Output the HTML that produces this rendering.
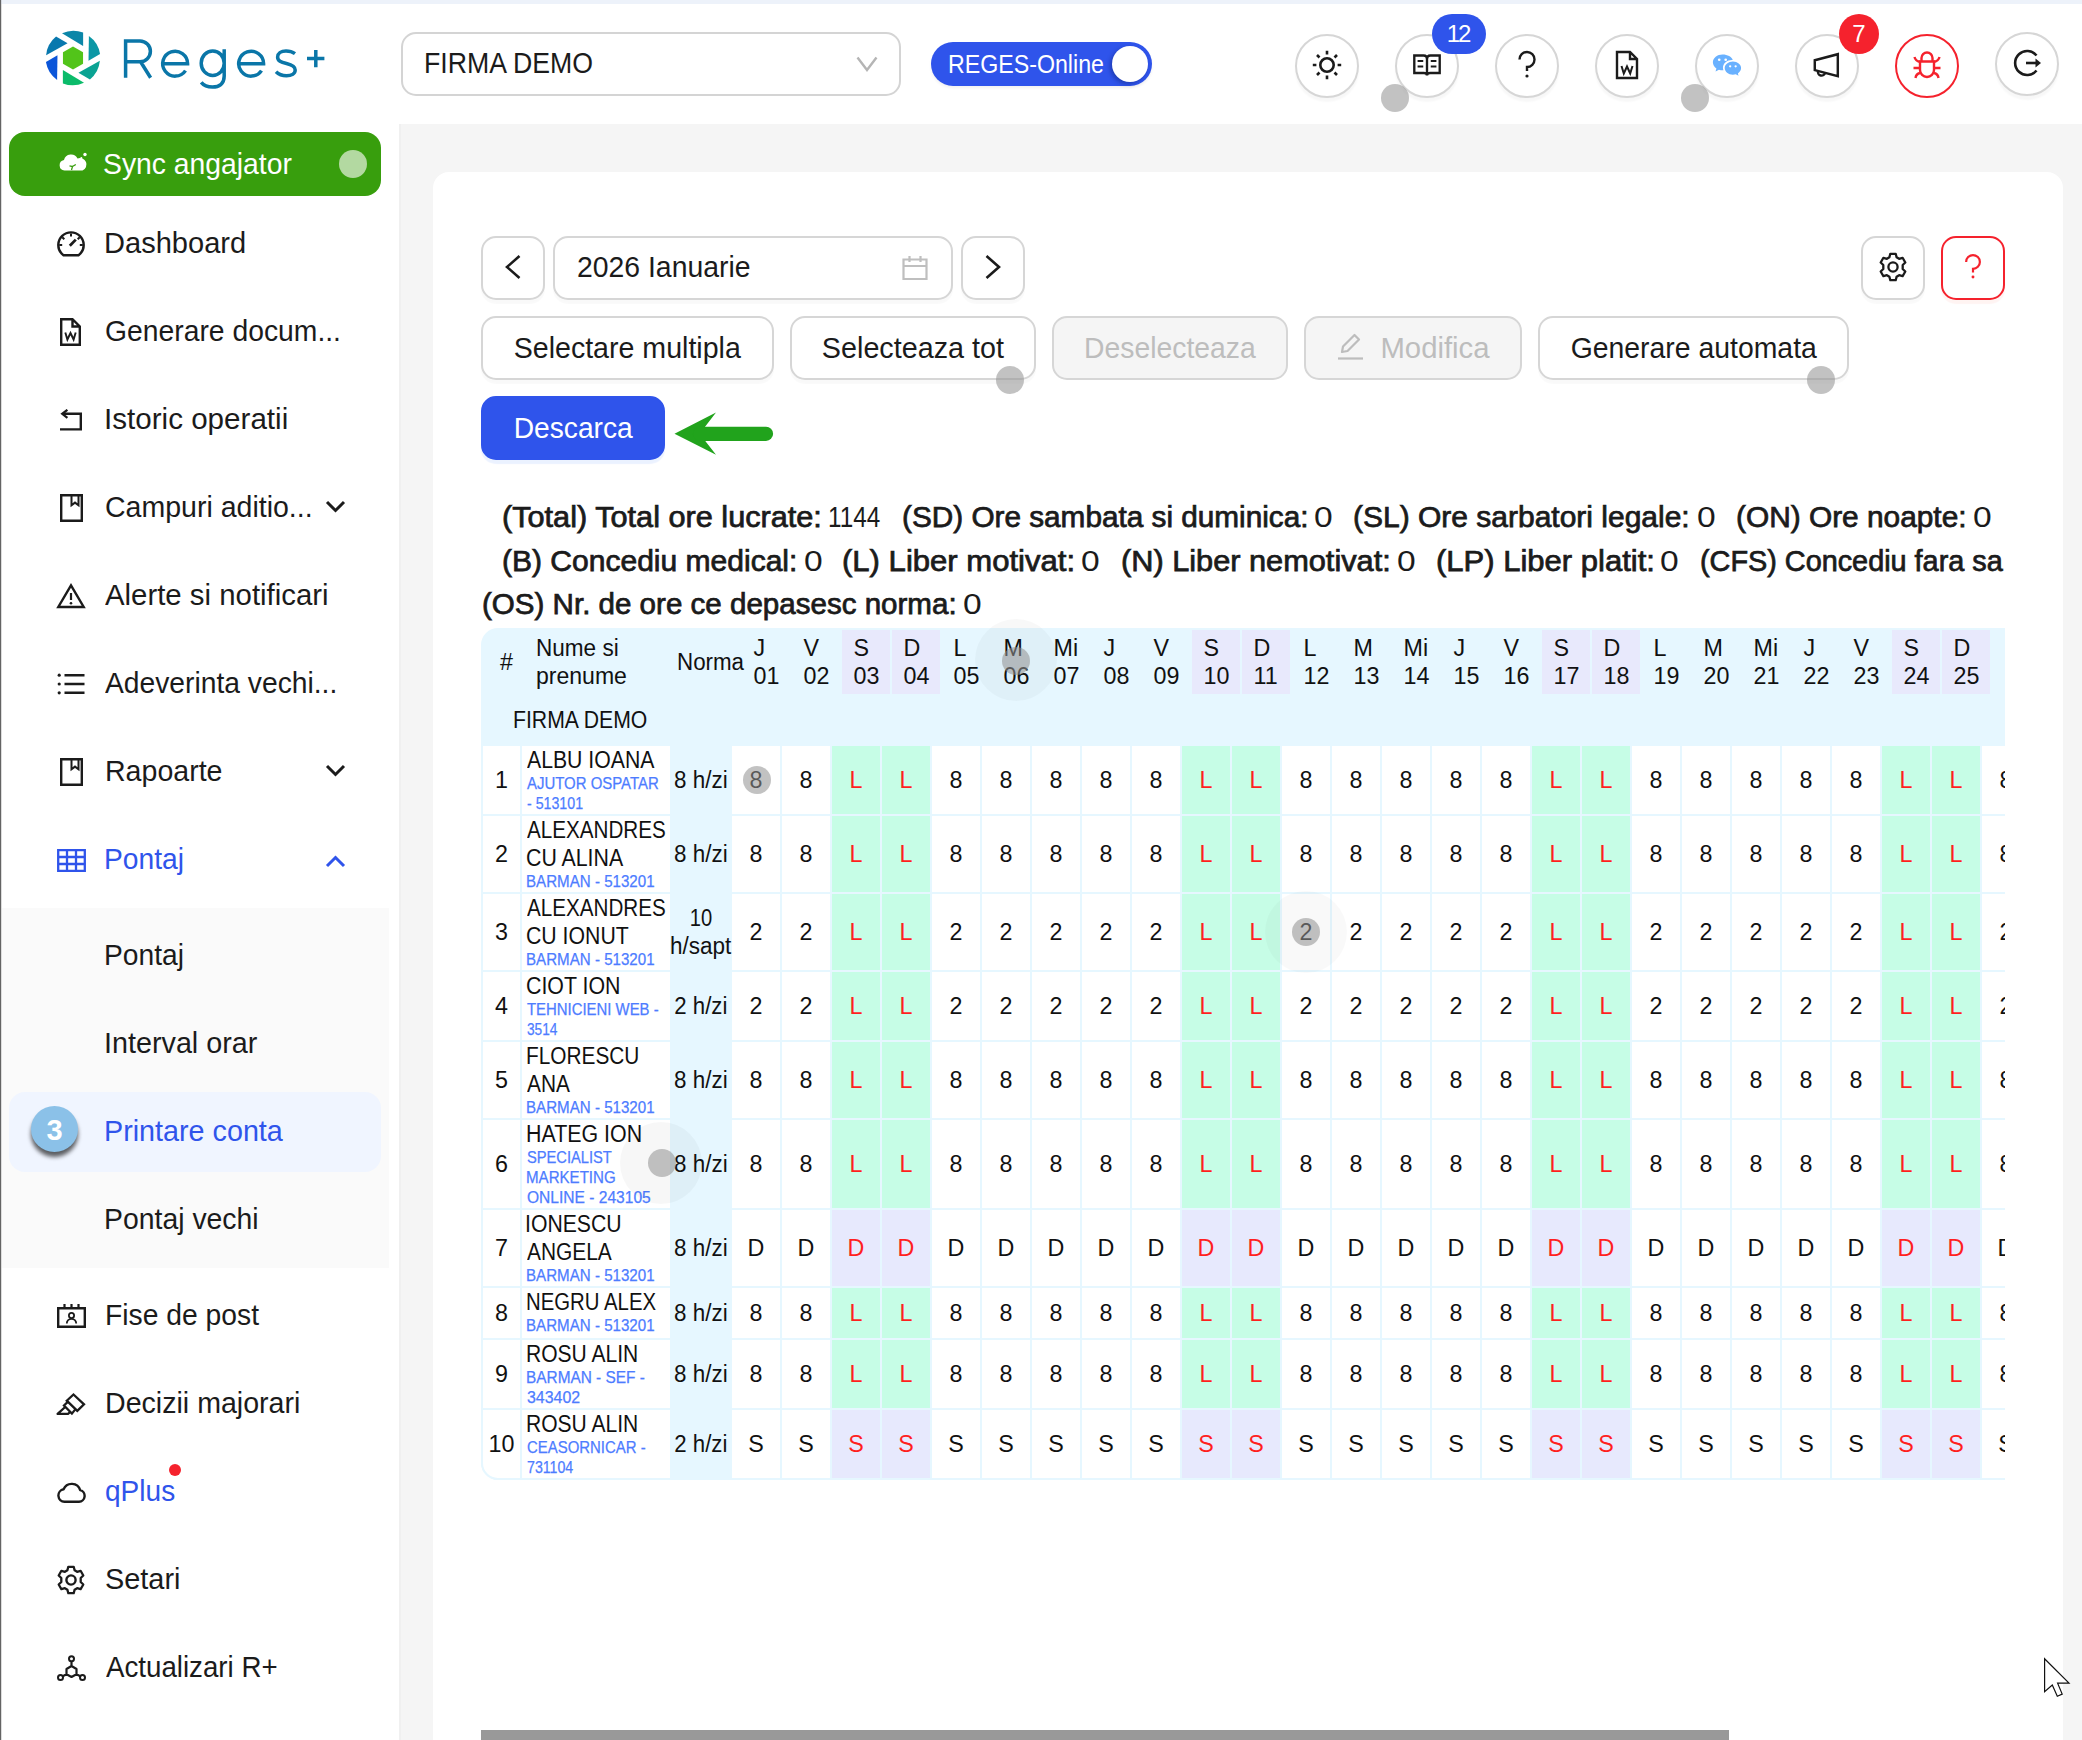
<!DOCTYPE html>
<html><head><meta charset="utf-8"><title>Reges+</title><style>
*{box-sizing:border-box;margin:0;padding:0}
html,body{width:2082px;height:1740px;overflow:hidden;background:#f5f5f5}
body{font-family:"Liberation Sans",sans-serif;color:#1b1b1b;position:relative}
.abs{position:absolute}
#topband{left:0;top:0;width:2082px;height:4px;background:#edf2fa}
#leftline{left:0;top:0;width:2px;height:1740px;background:linear-gradient(90deg,#646464 0,#646464 1px,rgba(0,0,0,.1) 1px,rgba(0,0,0,.1) 2px)}
#header{left:2px;top:4px;width:2080px;height:120px;background:#fff}
#sidebar{left:2px;top:124px;width:397px;height:1616px;background:#fff}
#card{left:433px;top:172px;width:1630px;height:1600px;background:#fff;border-radius:16px}
.t{position:absolute;white-space:nowrap;line-height:1}
.circ{position:absolute;width:64px;height:64px;border-radius:50%;border:2px solid #d6d6d6;background:#fff;box-shadow:0 4px 2px rgba(0,0,0,.03)}
.circ svg{position:absolute;left:50%;top:calc(50% - 1px);transform:translate(-50%,-50%)}
.dot{position:absolute;width:28px;height:28px;border-radius:50%;background:rgba(147,147,147,.56)}
.btn{position:absolute;height:64px;border:2px solid #d6d6d6;border-radius:15px;background:#fff;box-shadow:0 4px 1px rgba(0,0,0,.022);font-size:29px;display:flex;align-items:center;justify-content:center;white-space:nowrap;color:#1b1b1b;padding-top:1px}
.btn>svg{margin-top:-3px}
.btn.dis{background:#f5f5f5;color:#bdbdbd;box-shadow:none}
.mi{position:absolute;left:0;width:397px;height:80px}
.mi .ic{position:absolute;left:52px;top:22px;width:36px;height:36px}
.mi .tx{position:absolute;left:103px;top:0;height:80px;line-height:80px;font-size:28.6px;white-space:nowrap}
.mi .ar{position:absolute;left:322px;top:30px;width:24px;height:20px}
.blue{color:#2f54eb}
</style></head><body>
<div id="topband" class="abs"></div><div id="header" class="abs"></div><div id="sidebar" class="abs"></div><div id="card" class="abs"></div><div id="leftline" class="abs"></div><div class="abs" style="left:399px;top:124px;width:2px;height:1616px;background:#f0f0f0"></div>
<svg class="abs" style="left:40px;top:25px" width="66" height="66" viewBox="-33 -33 66 66"><g><path d="M-11 -24.7 A27.3 27.3 0 0 1 10.1 -25.4 L10.1 -12.1 Z" fill="#0b86a8" transform="rotate(0)"></path><path d="M-11 -24.7 A27.3 27.3 0 0 1 10.1 -25.4 L10.1 -12.1 Z" fill="#0b97a5" transform="rotate(60)"></path><path d="M-11 -24.7 A27.3 27.3 0 0 1 10.1 -25.4 L10.1 -12.1 Z" fill="#0aa393" transform="rotate(120)"></path><path d="M-11 -24.7 A27.3 27.3 0 0 1 10.1 -25.4 L10.1 -12.1 Z" fill="#0bbb6a" transform="rotate(180)"></path><path d="M-11 -24.7 A27.3 27.3 0 0 1 10.1 -25.4 L10.1 -12.1 Z" fill="#0b55d9" transform="rotate(240)"></path><path d="M-11 -24.7 A27.3 27.3 0 0 1 10.1 -25.4 L10.1 -12.1 Z" fill="#0878ae" transform="rotate(300)"></path><path d="M0 -11.6 L10.05 -5.8 L10.05 5.8 L0 11.6 L-10.05 5.8 L-10.05 -5.8 Z" fill="#52c41a"></path></g></svg>
<svg class="abs" style="left:0;top:0" width="360" height="110" viewBox="0 0 360 110" fill="none" stroke="#0a76a8" stroke-width="3.5"><path d="M125.6 77.7 V40.9 H140 a10.4 10.4 0 0 1 0 20.8 H125.6 M140.6 61.7 L150.6 77.7"></path><path d="M162.9 63.7 H187.6 A12.45 12.45 0 1 0 185.5 70.6"></path><path d="M238.9 63.7 H263.6 A12.45 12.45 0 1 0 261.5 70.6"></path><path d="M224.2 49.2 V76 C224.2 84 219 87.1 212.5 87.1 C207.5 87.1 203.5 85.3 201.2 82.4 M224.2 63.2 A11.5 12.3 0 1 1 201.2 63.2 A11.5 12.3 0 1 1 224.2 63.2"></path><path d="M295 53.6 C292.5 51.8 289.5 50.9 286 50.9 C281 50.9 277.6 53.4 277.6 57 C277.6 61 281 62.2 286.5 63.5 C292 64.8 295.2 66.3 295.2 70 C295.2 73.6 291.5 75.8 286.5 75.8 C282 75.8 278.5 74.3 276 71.8"></path><path d="M307 58.5 H324.4 M315.8 50 V67.3" stroke-width="3.5"></path></svg>
<div class="abs" style="left:401px;top:32px;width:500px;height:64px;border:2px solid #d4d4d4;border-radius:15px;background:#fff"></div>
<div class="t" style="left: 423.86px; top: 48px; font-size: 29px; line-height: 30px; color: rgb(27, 27, 27); transform: scaleX(0.9195); transform-origin: 0px 50%;">FIRMA DEMO</div>
<svg class="abs" style="left:855px;top:55px" width="24" height="18" viewBox="0 0 24 18" fill="none" stroke="#b5b5b5" stroke-width="2.4"><path d="M2.5 2.5 L12 15 L21.5 2.5"></path></svg>
<div class="abs" style="left:931px;top:42px;width:221px;height:44px;border-radius:22px;background:#2f54eb;box-shadow:0 2px 3px rgba(0,0,0,.06)"></div>
<div class="abs" style="left:1112px;top:46px;width:36px;height:36px;border-radius:50%;background:#fff;box-shadow:-2px 2px 4px rgba(0,20,80,.35)"></div>
<div class="t" style="left: 948.23px; top: 49.5px; font-size: 26.2px; line-height: 28px; color: rgb(255, 255, 255); transform: scaleX(0.8857); transform-origin: 0px 50%;">REGES-Online</div>
<div class="circ" style="left:1295px;top:34px;"><svg width="34" height="34" viewBox="-17 -17 34 34" fill="none" stroke="#1b1b1b" stroke-width="2.6" stroke-linecap="butt"><circle r="6.7"></circle><path d="M0 -14.2V-10.6M0 14.2V10.6M-14.2 0H-10.6M14.2 0H10.6M-10 -10L-7.500 -7.500M10 10L7.500 7.500M-10 10L-7.500 7.500M10 -10L7.500 -7.500"></path></svg></div>
<div class="circ" style="left:1395px;top:34px;"><svg width="32" height="30" viewBox="0 0 34 30" preserveAspectRatio="none" fill="none" stroke="#1b1b1b" stroke-width="2.5"><path d="M3.5 5.5H13.5Q17 5.5 17 9V25.5Q17 23 13.5 23H3.5ZM30.5 5.5H20.5Q17 5.5 17 9V25.5Q17 23 20.5 23H30.5Z"></path><path d="M7 11H13M7 16.5H13M21 11H27M21 16.5H27" stroke-width="2.2"></path></svg></div>
<div class="circ" style="left:1495px;top:34px;"><svg width="24" height="30" viewBox="0 0 24 30" fill="none" stroke="#1b1b1b" stroke-width="2.4"><path d="M4.5 9.5A7.5 7.5 0 1 1 12 17V21"></path><circle cx="12" cy="26" r="1.6" fill="#1b1b1b" stroke="none"></circle></svg></div>
<div class="circ" style="left:1595px;top:34px;"><svg width="26" height="32" viewBox="0 0 26 32" fill="none" stroke="#1b1b1b" stroke-width="2.4"><path d="M3 3H16L23 10V29H3ZM16 3V10H23"></path><path d="M7.5 17L9.8 24.5L13 17.5L16.2 24.5L18.5 17" stroke-width="2"></path></svg></div>
<div class="circ" style="left:1695px;top:34px;"><svg width="30" height="26.500" viewBox="0 0 34 30"><path d="M12 3C5.9 3 1 7 1 12c0 2.8 1.6 5.3 4 7l-1 3.4 3.9-2c1.3.4 2.7.6 4.100.6h1C12.500 20 12.400 19 12.400 18c0-5 4.700-8.800 10.300-8.800h.8C22.300 5.600 17.600 3 12 3Z" fill="#69b1ff"></path><path d="M33 18.500c0-4.200-4.200-7.600-9.300-7.600s-9.300 3.400-9.300 7.600 4.200 7.600 9.300 7.600c1.100 0 2.200-.2 3.200-.5l3.200 1.700-.8-2.800c2.200-1.400 3.700-3.500 3.700-6Z" fill="#69b1ff"></path><circle cx="8.200" cy="9" r="1.500" fill="#fff"></circle><circle cx="15.500" cy="9" r="1.500" fill="#fff"></circle><circle cx="20.600" cy="16.500" r="1.300" fill="#fff"></circle><circle cx="26.800" cy="16.500" r="1.300" fill="#fff"></circle></svg></div>
<div class="circ" style="left:1795px;top:34px;"><svg width="32" height="28.200" viewBox="0 0 34 30" fill="none" stroke="#1b1b1b" stroke-width="2.6"><path d="M4 10L28.500 3.500V27L4 20.500Z"></path><path d="M7.500 21.500A3.800 3.800 0 0 0 15 23.300"></path></svg></div>
<div class="circ" style="left:1895px;top:34px;border-color:#f5222d;box-shadow:none;"><svg width="32" height="32" viewBox="0 0 32 32" fill="none" stroke="#f5222d" stroke-width="2.4"><path d="M9 12.500H23V21A7 7 0 0 1 9 21Z"></path><path d="M10.500 12.500V9A5.500 5.500 0 0 1 21.500 9V12.500"></path><path d="M2.500 19H9M23 19H29.500M9 13Q4.500 12 3.500 8M23 13Q27.500 12 28.500 8M9 24Q5 25 4.500 29M23 24Q27 25 27.500 29"></path></svg></div>
<div class="circ" style="left:1995px;top:32px;"><svg width="32" height="32" viewBox="0 0 32 32" fill="none" stroke="#1b1b1b" stroke-width="2.6"><path d="M25.500 8.500A12 12 0 1 0 25.500 23.500"></path><path d="M15 16H27"></path><path d="M24.500 11.500L30 16L24.500 20.500Z" fill="#1b1b1b" stroke="none"></path></svg></div>
<div class="abs" style="left:1432px;top:14px;width:54px;height:40px;border-radius:20px;background:#2f54eb;color:#fff;font-size:24px;line-height:40px;text-align:center;letter-spacing:-2.2px;text-indent:-2px">12</div>
<div class="abs" style="left:1839px;top:14px;width:40px;height:40px;border-radius:20px;background:#f5222d;color:#fff;font-size:24px;line-height:40px;text-align:center">7</div>
<div class="dot" style="left:1381px;top:84px"></div><div class="dot" style="left:1681px;top:84px"></div>
<div class="abs" style="left:9px;top:132px;width:372px;height:64px;border-radius:16px;background:#389e0d"></div>
<svg class="abs" style="left:58px;top:151px" width="32" height="22" viewBox="0 0 32 22"><path d="M6.500 19.500A5.300 5.300 0 0 1 6 9A7.200 7.200 0 0 1 19.500 7.500A6 6 0 0 1 24.500 19.500Z" fill="#fff"></path><circle cx="27" cy="3.500" r="1.700" fill="#fff"></circle><circle cx="23.300" cy="7" r="1" fill="#fff"></circle><path d="M13.500 19L14.500 15.500L11.500 14.800M14.500 15.500L17.800 13.500" stroke="#389e0d" stroke-width="1.300" fill="none"></path></svg>
<div class="t" style="left: 102.92px; top: 147.5px; font-size: 29px; line-height: 32px; color: rgb(255, 255, 255); transform: scaleX(0.9761); transform-origin: 0px 50%;">Sync angajator</div>
<div class="abs" style="left:339px;top:150px;width:28px;height:28px;border-radius:50%;background:#b3d9a1"></div>
<div class="abs" style="left:2px;top:908px;width:387px;height:360px;background:#fafafa"></div>
<div class="abs" style="left:9px;top:1092px;width:372px;height:80px;border-radius:16px;background:#f0f5ff"></div>
<div class="t" style="left: 103.5px; top: 227px; font-size: 29px; line-height: 32px; color: rgb(27, 27, 27); transform: scaleX(1.0019); transform-origin: 0px 50%;">Dashboard</div>
<svg class="abs" style="left:56.0px;top:229.0px" width="30" height="28" viewBox="0 0 30 28" fill="none" stroke="#1b1b1b" stroke-width="2.4"><path d="M5.5 24.5A12.700 12.700 0 1 1 24.500 24.500L22.500 26.300H7.500Z"></path><path d="M15 4.500V7.500M6.300 8.300L8.300 10.300M23.700 8.300L21.700 10.300M3.200 16H6.200M26.800 16H23.800" stroke-width="2"></path><path d="M13.800 16.800L19.800 10.600" stroke-width="2.8"></path></svg>
<div class="t" style="left: 104.52px; top: 315px; font-size: 29px; line-height: 32px; color: rgb(27, 27, 27); transform: scaleX(0.976); transform-origin: 0px 50%;">Generare docum...</div>
<svg class="abs" style="left:58.8px;top:318.0px" width="23" height="28" viewBox="0 0 23 28" fill="none" stroke="#1b1b1b" stroke-width="2.4"><path d="M2.200 1.200H13.500L20.800 8.500V26.800H2.200ZM13.500 1.200V8.500H20.800"></path><path d="M6.300 14.500L8.400 21.500L11.500 15L14.600 21.500L16.700 14.500" stroke-width="1.900"></path></svg>
<div class="t" style="left: 103.96px; top: 403px; font-size: 29px; line-height: 32px; color: rgb(27, 27, 27); transform: scaleX(1.0205); transform-origin: 0px 50%;">Istoric operatii</div>
<svg class="abs" style="left:58.5px;top:409.0px" width="23" height="22" viewBox="0 0 23 22" fill="none" stroke="#1b1b1b" stroke-width="2.4"><path d="M1 20.400H21.800V4.800H4.500"></path><path d="M8.400 0.800L3.200 4.800L8.400 8.800" stroke-width="2.2"></path></svg>
<div class="t" style="left: 104.52px; top: 491px; font-size: 29px; line-height: 32px; color: rgb(27, 27, 27); transform: scaleX(0.9833); transform-origin: 0px 50%;">Campuri aditio...</div>
<svg class="abs" style="left:59.5px;top:494.0px" width="23" height="28" viewBox="0 0 23 28" fill="none" stroke="#1b1b1b" stroke-width="2.4"><path d="M1.200 1.200H21.800V26.800H1.200Z"></path><path d="M11.500 1.200V11.200L15 8.600L18.500 11.200V1.200" stroke-width="2"></path></svg>
<svg class="abs" style="left:325px;top:500px" width="21" height="14" viewBox="0 0 21 14" fill="none" stroke="#1b1b1b"><path d="M2 2L10.500 10.500L19 2" stroke-width="3"></path></svg>
<div class="t" style="left: 105.3px; top: 579px; font-size: 29px; line-height: 32px; color: rgb(27, 27, 27); transform: scaleX(1.0125); transform-origin: 0px 50%;">Alerte si notificari</div>
<svg class="abs" style="left:56.0px;top:583.0px" width="30" height="26" viewBox="0 0 30 26" fill="none" stroke="#1b1b1b" stroke-width="2.4"><path d="M15 2.400L27.700 24H2.300Z" stroke-linejoin="miter"></path><path d="M15 10V17" stroke-width="2.200"></path><circle cx="15" cy="20.300" r="1.300" fill="#1b1b1b" stroke="none"></circle></svg>
<div class="t" style="left: 105.3px; top: 667px; font-size: 29px; line-height: 32px; color: rgb(27, 27, 27); transform: scaleX(0.9737); transform-origin: 0px 50%;">Adeverinta vechi...</div>
<svg class="abs" style="left:57.0px;top:673.0px" width="28" height="22" viewBox="0 0 28 22" fill="none" stroke="#1b1b1b" stroke-width="2.4"><path d="M7.500 2.200H27.500M7.500 11H27.500M7.500 19.800H27.500"></path><circle cx="2.200" cy="2.200" r="1.600" fill="#1b1b1b" stroke="none"></circle><circle cx="2.200" cy="11" r="1.600" fill="#1b1b1b" stroke="none"></circle><circle cx="2.200" cy="19.800" r="1.600" fill="#1b1b1b" stroke="none"></circle></svg>
<div class="t" style="left: 104.63px; top: 755px; font-size: 29px; line-height: 32px; color: rgb(27, 27, 27); transform: scaleX(0.9848); transform-origin: 0px 50%;">Rapoarte</div>
<svg class="abs" style="left:59.5px;top:758.0px" width="23" height="28" viewBox="0 0 23 28" fill="none" stroke="#1b1b1b" stroke-width="2.4"><path d="M1.200 1.200H21.800V26.800H1.200Z"></path><path d="M11.500 1.200V11.200L15 8.600L18.500 11.200V1.200" stroke-width="2"></path></svg>
<svg class="abs" style="left:325px;top:764px" width="21" height="14" viewBox="0 0 21 14" fill="none" stroke="#1b1b1b"><path d="M2 2L10.500 10.500L19 2" stroke-width="3"></path></svg>
<div class="t" style="left: 104.26px; top: 843px; font-size: 29px; line-height: 32px; color: rgb(47, 84, 235); transform: scaleX(0.9723); transform-origin: 0px 50%;">Pontaj</div>
<svg class="abs" style="left:56.5px;top:848.5px" width="29" height="23" viewBox="0 0 29 23" fill="none" stroke="#2f54eb" stroke-width="2.4"><path d="M1.200 1.200H27.800V21.800H1.200ZM1.200 8H27.800M1.200 15H27.800M10 1.200V21.800M19 1.200V21.800" stroke-width="2.300"></path></svg>
<svg class="abs" style="left:325px;top:855px" width="21" height="14" viewBox="0 0 21 14" fill="none" stroke="#2f54eb"><path d="M2 11L10.500 2.500L19 11" stroke-width="3"></path></svg>
<div class="t" style="left: 104.26px; top: 939px; font-size: 29px; line-height: 32px; color: rgb(27, 27, 27); transform: scaleX(0.9723); transform-origin: 0px 50%;">Pontaj</div>
<div class="t" style="left: 104.22px; top: 1027px; font-size: 29px; line-height: 32px; color: rgb(27, 27, 27); transform: scaleX(0.991); transform-origin: 0px 50%;">Interval orar</div>
<div class="t" style="left: 103.72px; top: 1115px; font-size: 29px; line-height: 32px; color: rgb(47, 84, 235); transform: scaleX(0.9904); transform-origin: 0px 50%;">Printare conta</div>
<div class="t" style="left: 104.24px; top: 1203px; font-size: 29px; line-height: 32px; color: rgb(27, 27, 27); transform: scaleX(0.979); transform-origin: 0px 50%;">Pontaj vechi</div>
<div class="t" style="left: 104.65px; top: 1299px; font-size: 29px; line-height: 32px; color: rgb(27, 27, 27); transform: scaleX(0.9749); transform-origin: 0px 50%;">Fise de post</div>
<svg class="abs" style="left:56.5px;top:1304.0px" width="29" height="24" viewBox="0 0 29 24" fill="none" stroke="#1b1b1b" stroke-width="2.4"><path d="M1.200 4.200H27.800V22.800H1.200Z"></path><path d="M7.500 0V4.200M14.500 0V4.200M21.500 0V4.200" stroke-width="2.200"></path><circle cx="14.500" cy="11.500" r="2.600" stroke-width="1.800"></circle><path d="M9.800 19.500A4.700 4.700 0 0 1 19.200 19.500" stroke-width="1.800"></path></svg>
<div class="t" style="left: 104.63px; top: 1387px; font-size: 29px; line-height: 32px; color: rgb(27, 27, 27); transform: scaleX(0.9858); transform-origin: 0px 50%;">Decizii majorari</div>
<svg class="abs" style="left:55px;top:1390px" width="32" height="27" viewBox="55 1390 32 27" fill="none" stroke="#1b1b1b" stroke-width="2.3" stroke-linejoin="miter"><path d="M73.500 1394.500L84 1404.300L77.300 1410.800L66.800 1400.700Z"></path><path d="M67.800 1401.900L64 1405.500L71.900 1413.600L75.500 1409.100"></path><path d="M65.200 1407L57.600 1413.900H68L70.400 1411.900" stroke-linejoin="round"></path></svg>
<div class="t" style="left: 104.73px; top: 1475px; font-size: 29px; line-height: 32px; color: rgb(47, 84, 235); transform: scaleX(0.967); transform-origin: 0px 50%;">qPlus</div>
<svg class="abs" style="left:56.5px;top:1481.5px" width="29" height="21" viewBox="0 0 29 21" fill="none" stroke="#1b1b1b" stroke-width="2.4"><path d="M7.500 19.800A6.300 6.300 0 0 1 6.600 7.300A8.800 8.800 0 0 1 23.200 8.200A5.900 5.900 0 0 1 22 19.800Z" stroke-linejoin="round"></path></svg>
<div class="t" style="left: 104.7px; top: 1563px; font-size: 29px; line-height: 32px; color: rgb(27, 27, 27); transform: scaleX(0.9957); transform-origin: 0px 50%;">Setari</div>
<svg class="abs" style="left:56.0px;top:1565.0px" width="30" height="30" viewBox="0 0 30 30" fill="none" stroke="#1b1b1b" stroke-width="2.4"><circle cx="15" cy="15" r="4.600"></circle><path d="M12.300 1.800H17.700L18.600 5.300L21.100 6.800L24.600 5.800L27.300 10.500L24.700 13V17L27.300 19.500L24.600 24.200L21.100 23.200L18.600 24.700L17.700 28.200H12.300L11.400 24.700L8.900 23.200L5.400 24.200L2.700 19.500L5.300 17V13L2.700 10.500L5.400 5.800L8.900 6.800L11.400 5.300Z" stroke-linejoin="round" stroke-width="2.300"></path></svg>
<div class="t" style="left: 105.7px; top: 1651px; font-size: 29px; line-height: 32px; color: rgb(27, 27, 27); transform: scaleX(0.9549); transform-origin: 0px 50%;">Actualizari R+</div>
<svg class="abs" style="left:56.5px;top:1655.0px" width="29" height="26" viewBox="0 0 29 26" fill="none" stroke="#1b1b1b" stroke-width="2.4"><circle cx="14.500" cy="3.800" r="2.500" stroke-width="2"></circle><circle cx="3.500" cy="22.500" r="2.500" stroke-width="2"></circle><circle cx="25.500" cy="22.500" r="2.500" stroke-width="2"></circle><path d="M14.500 6.300V11M14.500 11L9.500 14V19.300L14.500 22L19.500 19.300V14ZM9.500 19.300L5.700 21.300M19.500 19.300L23.300 21.300" stroke-width="2.200" stroke-linejoin="round"></path></svg>
<div class="abs" style="left:169px;top:1464px;width:12px;height:12px;border-radius:50%;background:#f5222d"></div>
<div class="abs" style="left:31px;top:1106px;width:47px;height:45.5px;border-radius:50%;background:#8bc1e8;box-shadow:0 5px 4px rgba(0,0,0,.62);color:#fff;font-weight:700;font-size:29px;line-height:49px;text-align:center">3</div>
<div class="btn" style="left:481px;top:236px;width:64px"><svg width="18" height="26" viewBox="0 0 18 26" fill="none" stroke="#1b1b1b" stroke-width="2.6"><path d="M15.500 2L3 13L15.500 24"></path></svg></div>
<div class="btn" style="left:553px;top:236px;width:400px"></div>
<div class="t" style="left: 577.02px; top: 251px; font-size: 29px; line-height: 32px; color: rgb(27, 27, 27); font-weight: 400; transform: scaleX(0.9781); transform-origin: 0px 50%;">2026 Ianuarie</div>
<svg class="abs" style="left:902px;top:255px" width="26" height="26" viewBox="0 0 26 26" fill="none" stroke="#bfbfbf" stroke-width="2.2"><path d="M1.500 4.500H24.500V24H1.500ZM1.500 11H24.500M7.500 1V7M18.500 1V7"></path></svg>
<div class="btn" style="left:961px;top:236px;width:64px"><svg width="18" height="26" viewBox="0 0 18 26" fill="none" stroke="#1b1b1b" stroke-width="2.6"><path d="M2.500 2L15 13L2.500 24"></path></svg></div>
<div class="btn" style="left:1861px;top:236px;width:64px"><svg width="30" height="30" viewBox="0 0 30 30" fill="none" stroke="#1b1b1b" stroke-width="2.3"><circle cx="15" cy="15" r="4.600"></circle><path d="M12.300 1.800H17.700L18.600 5.300L21.100 6.800L24.600 5.800L27.300 10.500L24.700 13V17L27.300 19.500L24.600 24.200L21.100 23.200L18.600 24.700L17.700 28.200H12.300L11.400 24.700L8.900 23.200L5.400 24.200L2.700 19.500L5.300 17V13L2.700 10.500L5.400 5.800L8.900 6.800L11.400 5.300Z" stroke-linejoin="round"></path></svg></div>
<div class="btn" style="left:1941px;top:236px;width:64px;border-color:#f5222d;box-shadow:0 4px 1px rgba(255,38,5,.05)"><svg width="22" height="28" viewBox="0 0 24 30" fill="none" stroke="#f5222d" stroke-width="2.4"><path d="M4.500 9.500A7.500 7.500 0 1 1 12 17V21"></path><circle cx="12" cy="26" r="1.600" fill="#f5222d" stroke="none"></circle></svg></div>
<div class="btn" style="left:481px;top:316px;width:293px;"><span style="display: inline-block; transform: scaleX(0.9854); transform-origin: 50% 50%;">Selectare multipla</span></div>
<div class="btn" style="left:790px;top:316px;width:246px;"><span style="display: inline-block; transform: scaleX(0.9905); transform-origin: 50% 50%;">Selecteaza tot</span></div>
<div class="btn dis" style="left:1052px;top:316px;width:236px;"><span style="display: inline-block; transform: scaleX(0.9766); transform-origin: 50% 50%;">Deselecteaza</span></div>
<div class="btn dis" style="left:1304px;top:316px;width:218px;"><svg width="27" height="27" viewBox="0 0 27 27" fill="none" stroke="#bdbdbd" stroke-width="2.2" style="margin-right:17px;margin-top:-4px"><path d="M1 25.500H26"></path><path d="M5 19L6 13.500L17.500 2L22 6.500L10.500 18Z" stroke-linejoin="round"></path></svg><span style="display: inline-block; transform: scaleX(1.0107); transform-origin: 50% 50%;">Modifica</span></div>
<div class="btn" style="left:1538px;top:316px;width:311px;"><span style="display: inline-block; transform: scaleX(0.9787); transform-origin: 50% 50%;">Generare automata</span></div>
<div class="dot" style="left:996px;top:366px"></div><div class="dot" style="left:1807px;top:366px"></div>
<div class="btn" style="left:481px;top:396px;width:184px;height:64px;background:#2f54eb;border-color:#2f54eb;color:#fff;border-radius:15px;box-shadow:0 4px 1px rgba(5,95,255,.08)"><span style="display: inline-block; transform: scaleX(0.9723); transform-origin: 50% 50%;">Descarca</span></div>
<svg class="abs" style="left:670px;top:408px" width="110" height="52" viewBox="670 408 110 52"><path d="M674.500 433.700L716 412.600L703.500 428.800 L703.500 438.800 L716 454.800Z" fill="#21a31c"></path><path d="M700 433.800H766" stroke="#21a31c" stroke-width="14.200" stroke-linecap="round"></path></svg>
<div class="t" style="left: 501.94px; top: 501px; font-size: 29px; line-height: 32px; color: rgb(27, 27, 27); font-weight: 400; -webkit-text-stroke: 0.75px rgb(27, 27, 27); transform: scaleX(1.0575); transform-origin: 0px 50%;">(Total) Total ore lucrate:</div>
<div class="t" style="left: 828.03px; top: 501px; font-size: 29px; line-height: 32px; color: rgb(27, 27, 27); font-weight: 400; transform: scaleX(0.8368); transform-origin: 0px 50%;">1144</div>
<div class="t" style="left: 901.57px; top: 501px; font-size: 29px; line-height: 32px; color: rgb(27, 27, 27); font-weight: 400; -webkit-text-stroke: 0.75px rgb(27, 27, 27); transform: scaleX(1.0254); transform-origin: 0px 50%;">(SD) Ore sambata si duminica:</div>
<div class="t" style="left: 1313.64px; top: 501px; font-size: 29px; line-height: 32px; color: rgb(27, 27, 27); font-weight: 400; transform: scaleX(1.1571); transform-origin: 0px 50%;">0</div>
<div class="t" style="left: 1353.47px; top: 501px; font-size: 29px; line-height: 32px; color: rgb(27, 27, 27); font-weight: 400; -webkit-text-stroke: 0.75px rgb(27, 27, 27); transform: scaleX(1.034); transform-origin: 0px 50%;">(SL) Ore sarbatori legale:</div>
<div class="t" style="left: 1696.64px; top: 501px; font-size: 29px; line-height: 32px; color: rgb(27, 27, 27); font-weight: 400; transform: scaleX(1.1571); transform-origin: 0px 50%;">0</div>
<div class="t" style="left: 1735.57px; top: 501px; font-size: 29px; line-height: 32px; color: rgb(27, 27, 27); font-weight: 400; -webkit-text-stroke: 0.75px rgb(27, 27, 27); transform: scaleX(1.0291); transform-origin: 0px 50%;">(ON) Ore noapte:</div>
<div class="t" style="left: 1972.64px; top: 501px; font-size: 29px; line-height: 32px; color: rgb(27, 27, 27); font-weight: 400; transform: scaleX(1.1571); transform-origin: 0px 50%;">0</div>
<div class="t" style="left: 501.96px; top: 544.5px; font-size: 29px; line-height: 32px; color: rgb(27, 27, 27); font-weight: 400; -webkit-text-stroke: 0.75px rgb(27, 27, 27); transform: scaleX(1.0353); transform-origin: 0px 50%;">(B) Concediu medical:</div>
<div class="t" style="left: 803.54px; top: 544.5px; font-size: 29px; line-height: 32px; color: rgb(27, 27, 27); font-weight: 400; transform: scaleX(1.1571); transform-origin: 0px 50%;">0</div>
<div class="t" style="left: 842.33px; top: 544.5px; font-size: 29px; line-height: 32px; color: rgb(27, 27, 27); font-weight: 400; -webkit-text-stroke: 0.75px rgb(27, 27, 27); transform: scaleX(1.0713); transform-origin: 0px 50%;">(L) Liber motivat:</div>
<div class="t" style="left: 1081.44px; top: 544.5px; font-size: 29px; line-height: 32px; color: rgb(27, 27, 27); font-weight: 400; transform: scaleX(1.1571); transform-origin: 0px 50%;">0</div>
<div class="t" style="left: 1120.94px; top: 544.5px; font-size: 29px; line-height: 32px; color: rgb(27, 27, 27); font-weight: 400; -webkit-text-stroke: 0.75px rgb(27, 27, 27); transform: scaleX(1.0593); transform-origin: 0px 50%;">(N) Liber nemotivat:</div>
<div class="t" style="left: 1396.64px; top: 544.5px; font-size: 29px; line-height: 32px; color: rgb(27, 27, 27); font-weight: 400; transform: scaleX(1.1571); transform-origin: 0px 50%;">0</div>
<div class="t" style="left: 1435.93px; top: 544.5px; font-size: 29px; line-height: 32px; color: rgb(27, 27, 27); font-weight: 400; -webkit-text-stroke: 0.75px rgb(27, 27, 27); transform: scaleX(1.0692); transform-origin: 0px 50%;">(LP) Liber platit:</div>
<div class="t" style="left: 1660.44px; top: 544.5px; font-size: 29px; line-height: 32px; color: rgb(27, 27, 27); font-weight: 400; transform: scaleX(1.1571); transform-origin: 0px 50%;">0</div>
<div class="t" style="left: 1700.01px; top: 544.5px; font-size: 29px; line-height: 32px; color: rgb(27, 27, 27); font-weight: 400; -webkit-text-stroke: 0.75px rgb(27, 27, 27); transform: scaleX(0.9938); transform-origin: 0px 50%;">(CFS) Concediu fara sa</div>
<div class="t" style="left: 481.98px; top: 587.5px; font-size: 29px; line-height: 32px; color: rgb(27, 27, 27); font-weight: 400; -webkit-text-stroke: 0.75px rgb(27, 27, 27); transform: scaleX(1.0189); transform-origin: 0px 50%;">(OS) Nr. de ore ce depasesc norma:</div>
<div class="t" style="left: 962.84px; top: 587.5px; font-size: 29px; line-height: 32px; color: rgb(27, 27, 27); font-weight: 400; transform: scaleX(1.1571); transform-origin: 0px 50%;">0</div>
<div class="abs" style="left:481px;top:628px;width:1524px;height:852px;overflow:hidden;border-radius:17px 0 0 17px;background:#e6f7ff">
<div class="t" style="left:-4.5px;top:20px;width:60px;text-align:center;font-size:23.3px;line-height:28px;color:#111">#</div>
<div class="t" style="left: 54.83px; top: 6px; font-size: 23.3px; line-height: 28px; color: rgb(17, 17, 17); transform: scaleX(0.968); transform-origin: 0px 50%;">Nume si</div>
<div class="t" style="left: 54.81px; top: 34px; font-size: 23.3px; line-height: 28px; color: rgb(17, 17, 17); transform: scaleX(0.989); transform-origin: 0px 50%;">prenume</div>
<div class="t" style="left: 196.34px; top: 20px; font-size: 23.3px; line-height: 28px; color: rgb(17, 17, 17); transform: scaleX(0.9587); transform-origin: 0px 50%;">Norma</div>
<div class="abs" style="left:272.6px;top:6px;font-size:23.3px;line-height:28px;color:#111;text-align:left;white-space:nowrap">J<br>01</div>
<div class="abs" style="left:322.6px;top:6px;font-size:23.3px;line-height:28px;color:#111;text-align:left;white-space:nowrap">V<br>02</div>
<div class="abs" style="left:361px;top:2px;width:48px;height:64px;background:#e8e9fc"></div>
<div class="abs" style="left:372.6px;top:6px;font-size:23.3px;line-height:28px;color:#111;text-align:left;white-space:nowrap">S<br>03</div>
<div class="abs" style="left:411px;top:2px;width:48px;height:64px;background:#e8e9fc"></div>
<div class="abs" style="left:422.6px;top:6px;font-size:23.3px;line-height:28px;color:#111;text-align:left;white-space:nowrap">D<br>04</div>
<div class="abs" style="left:472.6px;top:6px;font-size:23.3px;line-height:28px;color:#111;text-align:left;white-space:nowrap">L<br>05</div>
<div class="abs" style="left:522.6px;top:6px;font-size:23.3px;line-height:28px;color:#111;text-align:left;white-space:nowrap">M<br>06</div>
<div class="abs" style="left:572.6px;top:6px;font-size:23.3px;line-height:28px;color:#111;text-align:left;white-space:nowrap">Mi<br>07</div>
<div class="abs" style="left:622.6px;top:6px;font-size:23.3px;line-height:28px;color:#111;text-align:left;white-space:nowrap">J<br>08</div>
<div class="abs" style="left:672.6px;top:6px;font-size:23.3px;line-height:28px;color:#111;text-align:left;white-space:nowrap">V<br>09</div>
<div class="abs" style="left:711px;top:2px;width:48px;height:64px;background:#e8e9fc"></div>
<div class="abs" style="left:722.6px;top:6px;font-size:23.3px;line-height:28px;color:#111;text-align:left;white-space:nowrap">S<br>10</div>
<div class="abs" style="left:761px;top:2px;width:48px;height:64px;background:#e8e9fc"></div>
<div class="abs" style="left:772.6px;top:6px;font-size:23.3px;line-height:28px;color:#111;text-align:left;white-space:nowrap">D<br>11</div>
<div class="abs" style="left:822.6px;top:6px;font-size:23.3px;line-height:28px;color:#111;text-align:left;white-space:nowrap">L<br>12</div>
<div class="abs" style="left:872.6px;top:6px;font-size:23.3px;line-height:28px;color:#111;text-align:left;white-space:nowrap">M<br>13</div>
<div class="abs" style="left:922.6px;top:6px;font-size:23.3px;line-height:28px;color:#111;text-align:left;white-space:nowrap">Mi<br>14</div>
<div class="abs" style="left:972.6px;top:6px;font-size:23.3px;line-height:28px;color:#111;text-align:left;white-space:nowrap">J<br>15</div>
<div class="abs" style="left:1022.6px;top:6px;font-size:23.3px;line-height:28px;color:#111;text-align:left;white-space:nowrap">V<br>16</div>
<div class="abs" style="left:1061px;top:2px;width:48px;height:64px;background:#e8e9fc"></div>
<div class="abs" style="left:1072.6px;top:6px;font-size:23.3px;line-height:28px;color:#111;text-align:left;white-space:nowrap">S<br>17</div>
<div class="abs" style="left:1111px;top:2px;width:48px;height:64px;background:#e8e9fc"></div>
<div class="abs" style="left:1122.6px;top:6px;font-size:23.3px;line-height:28px;color:#111;text-align:left;white-space:nowrap">D<br>18</div>
<div class="abs" style="left:1172.6px;top:6px;font-size:23.3px;line-height:28px;color:#111;text-align:left;white-space:nowrap">L<br>19</div>
<div class="abs" style="left:1222.6px;top:6px;font-size:23.3px;line-height:28px;color:#111;text-align:left;white-space:nowrap">M<br>20</div>
<div class="abs" style="left:1272.6px;top:6px;font-size:23.3px;line-height:28px;color:#111;text-align:left;white-space:nowrap">Mi<br>21</div>
<div class="abs" style="left:1322.6px;top:6px;font-size:23.3px;line-height:28px;color:#111;text-align:left;white-space:nowrap">J<br>22</div>
<div class="abs" style="left:1372.6px;top:6px;font-size:23.3px;line-height:28px;color:#111;text-align:left;white-space:nowrap">V<br>23</div>
<div class="abs" style="left:1411px;top:2px;width:48px;height:64px;background:#e8e9fc"></div>
<div class="abs" style="left:1422.6px;top:6px;font-size:23.3px;line-height:28px;color:#111;text-align:left;white-space:nowrap">S<br>24</div>
<div class="abs" style="left:1461px;top:2px;width:48px;height:64px;background:#e8e9fc"></div>
<div class="abs" style="left:1472.6px;top:6px;font-size:23.3px;line-height:28px;color:#111;text-align:left;white-space:nowrap">D<br>25</div>
<div class="t" style="left: 31.89px; top: 77.6px; font-size: 23.3px; line-height: 28px; color: rgb(17, 17, 17); transform: scaleX(0.9106); transform-origin: 0px 50%;">FIRMA DEMO</div>
<div class="abs" style="left:2px;top:118px;width:37px;height:68px;background:#fff"></div>
<div class="abs" style="left:41px;top:118px;width:148px;height:68px;background:#fff"></div>
<div class="t" style="left:-9.5px;top:138.0px;width:60px;text-align:center;font-size:23.3px;line-height:28px;color:#111">1</div>
<div class="t" style="left: 46.1px; top: 118px; font-size: 23.3px; line-height: 28px; color: rgb(17, 17, 17); transform: scaleX(0.911); transform-origin: 0px 50%;">ALBU IOANA</div>
<div class="t" style="left: 46.2px; top: 146px; font-size: 15.9px; line-height: 20px; color: rgb(77, 124, 255); -webkit-text-stroke: 0.25px rgb(77, 124, 255); transform: scaleX(0.9405); transform-origin: 0px 50%;">AJUTOR OSPATAR</div>
<div class="t" style="left: 46.2px; top: 166px; font-size: 15.9px; line-height: 20px; color: rgb(77, 124, 255); -webkit-text-stroke: 0.25px rgb(77, 124, 255); transform: scaleX(0.8936); transform-origin: 0px 50%;">- 513101</div>
<div class="t" style="left:175.20000000000005px;top:138.0px;width:90px;text-align:center;font-size:23.3px;line-height:28px;color:#111"><span style="display: inline-block; transform: scaleX(0.9625); transform-origin: 50% 50%;">8 h/zi</span></div>
<div class="abs" style="left:251px;top:118px;width:48px;height:68px;background:#fff"></div>
<div class="t" style="left:245.0px;top:138.0px;width:60px;text-align:center;font-size:23.3px;line-height:28px;color:#111">8</div>
<div class="abs" style="left:301px;top:118px;width:48px;height:68px;background:#fff"></div>
<div class="t" style="left:295.0px;top:138.0px;width:60px;text-align:center;font-size:23.3px;line-height:28px;color:#111">8</div>
<div class="abs" style="left:351px;top:118px;width:48px;height:68px;background:#c6fde6"></div>
<div class="t" style="left:345.0px;top:138.0px;width:60px;text-align:center;font-size:23.3px;line-height:28px;color:#ff1f1f">L</div>
<div class="abs" style="left:401px;top:118px;width:48px;height:68px;background:#c6fde6"></div>
<div class="t" style="left:395.0px;top:138.0px;width:60px;text-align:center;font-size:23.3px;line-height:28px;color:#ff1f1f">L</div>
<div class="abs" style="left:451px;top:118px;width:48px;height:68px;background:#fff"></div>
<div class="t" style="left:445.0px;top:138.0px;width:60px;text-align:center;font-size:23.3px;line-height:28px;color:#111">8</div>
<div class="abs" style="left:501px;top:118px;width:48px;height:68px;background:#fff"></div>
<div class="t" style="left:495.0px;top:138.0px;width:60px;text-align:center;font-size:23.3px;line-height:28px;color:#111">8</div>
<div class="abs" style="left:551px;top:118px;width:48px;height:68px;background:#fff"></div>
<div class="t" style="left:545.0px;top:138.0px;width:60px;text-align:center;font-size:23.3px;line-height:28px;color:#111">8</div>
<div class="abs" style="left:601px;top:118px;width:48px;height:68px;background:#fff"></div>
<div class="t" style="left:595.0px;top:138.0px;width:60px;text-align:center;font-size:23.3px;line-height:28px;color:#111">8</div>
<div class="abs" style="left:651px;top:118px;width:48px;height:68px;background:#fff"></div>
<div class="t" style="left:645.0px;top:138.0px;width:60px;text-align:center;font-size:23.3px;line-height:28px;color:#111">8</div>
<div class="abs" style="left:701px;top:118px;width:48px;height:68px;background:#c6fde6"></div>
<div class="t" style="left:695.0px;top:138.0px;width:60px;text-align:center;font-size:23.3px;line-height:28px;color:#ff1f1f">L</div>
<div class="abs" style="left:751px;top:118px;width:48px;height:68px;background:#c6fde6"></div>
<div class="t" style="left:745.0px;top:138.0px;width:60px;text-align:center;font-size:23.3px;line-height:28px;color:#ff1f1f">L</div>
<div class="abs" style="left:801px;top:118px;width:48px;height:68px;background:#fff"></div>
<div class="t" style="left:795.0px;top:138.0px;width:60px;text-align:center;font-size:23.3px;line-height:28px;color:#111">8</div>
<div class="abs" style="left:851px;top:118px;width:48px;height:68px;background:#fff"></div>
<div class="t" style="left:845.0px;top:138.0px;width:60px;text-align:center;font-size:23.3px;line-height:28px;color:#111">8</div>
<div class="abs" style="left:901px;top:118px;width:48px;height:68px;background:#fff"></div>
<div class="t" style="left:895.0px;top:138.0px;width:60px;text-align:center;font-size:23.3px;line-height:28px;color:#111">8</div>
<div class="abs" style="left:951px;top:118px;width:48px;height:68px;background:#fff"></div>
<div class="t" style="left:945.0px;top:138.0px;width:60px;text-align:center;font-size:23.3px;line-height:28px;color:#111">8</div>
<div class="abs" style="left:1001px;top:118px;width:48px;height:68px;background:#fff"></div>
<div class="t" style="left:995.0px;top:138.0px;width:60px;text-align:center;font-size:23.3px;line-height:28px;color:#111">8</div>
<div class="abs" style="left:1051px;top:118px;width:48px;height:68px;background:#c6fde6"></div>
<div class="t" style="left:1045.0px;top:138.0px;width:60px;text-align:center;font-size:23.3px;line-height:28px;color:#ff1f1f">L</div>
<div class="abs" style="left:1101px;top:118px;width:48px;height:68px;background:#c6fde6"></div>
<div class="t" style="left:1095.0px;top:138.0px;width:60px;text-align:center;font-size:23.3px;line-height:28px;color:#ff1f1f">L</div>
<div class="abs" style="left:1151px;top:118px;width:48px;height:68px;background:#fff"></div>
<div class="t" style="left:1145.0px;top:138.0px;width:60px;text-align:center;font-size:23.3px;line-height:28px;color:#111">8</div>
<div class="abs" style="left:1201px;top:118px;width:48px;height:68px;background:#fff"></div>
<div class="t" style="left:1195.0px;top:138.0px;width:60px;text-align:center;font-size:23.3px;line-height:28px;color:#111">8</div>
<div class="abs" style="left:1251px;top:118px;width:48px;height:68px;background:#fff"></div>
<div class="t" style="left:1245.0px;top:138.0px;width:60px;text-align:center;font-size:23.3px;line-height:28px;color:#111">8</div>
<div class="abs" style="left:1301px;top:118px;width:48px;height:68px;background:#fff"></div>
<div class="t" style="left:1295.0px;top:138.0px;width:60px;text-align:center;font-size:23.3px;line-height:28px;color:#111">8</div>
<div class="abs" style="left:1351px;top:118px;width:48px;height:68px;background:#fff"></div>
<div class="t" style="left:1345.0px;top:138.0px;width:60px;text-align:center;font-size:23.3px;line-height:28px;color:#111">8</div>
<div class="abs" style="left:1401px;top:118px;width:48px;height:68px;background:#c6fde6"></div>
<div class="t" style="left:1395.0px;top:138.0px;width:60px;text-align:center;font-size:23.3px;line-height:28px;color:#ff1f1f">L</div>
<div class="abs" style="left:1451px;top:118px;width:48px;height:68px;background:#c6fde6"></div>
<div class="t" style="left:1445.0px;top:138.0px;width:60px;text-align:center;font-size:23.3px;line-height:28px;color:#ff1f1f">L</div>
<div class="abs" style="left:1501px;top:118px;width:48px;height:68px;background:#fff"></div>
<div class="t" style="left:1495.0px;top:138.0px;width:60px;text-align:center;font-size:23.3px;line-height:28px;color:#111">8</div>
<div class="abs" style="left:2px;top:188px;width:37px;height:76px;background:#fff"></div>
<div class="abs" style="left:41px;top:188px;width:148px;height:76px;background:#fff"></div>
<div class="t" style="left:-9.5px;top:212.0px;width:60px;text-align:center;font-size:23.3px;line-height:28px;color:#111">2</div>
<div class="t" style="left: 46.1px; top: 188px; font-size: 23.3px; line-height: 28px; color: rgb(17, 17, 17); transform: scaleX(0.8858); transform-origin: 0px 50%;">ALEXANDRES</div>
<div class="t" style="left: 45.19px; top: 216px; font-size: 23.3px; line-height: 28px; color: rgb(17, 17, 17); transform: scaleX(0.9148); transform-origin: 0px 50%;">CU ALINA</div>
<div class="t" style="left: 45.25px; top: 244px; font-size: 15.9px; line-height: 20px; color: rgb(77, 124, 255); -webkit-text-stroke: 0.25px rgb(77, 124, 255); transform: scaleX(0.9516); transform-origin: 0px 50%;">BARMAN - 513201</div>
<div class="t" style="left:175.20000000000005px;top:212.0px;width:90px;text-align:center;font-size:23.3px;line-height:28px;color:#111"><span style="display: inline-block; transform: scaleX(0.9625); transform-origin: 50% 50%;">8 h/zi</span></div>
<div class="abs" style="left:251px;top:188px;width:48px;height:76px;background:#fff"></div>
<div class="t" style="left:245.0px;top:212.0px;width:60px;text-align:center;font-size:23.3px;line-height:28px;color:#111">8</div>
<div class="abs" style="left:301px;top:188px;width:48px;height:76px;background:#fff"></div>
<div class="t" style="left:295.0px;top:212.0px;width:60px;text-align:center;font-size:23.3px;line-height:28px;color:#111">8</div>
<div class="abs" style="left:351px;top:188px;width:48px;height:76px;background:#c6fde6"></div>
<div class="t" style="left:345.0px;top:212.0px;width:60px;text-align:center;font-size:23.3px;line-height:28px;color:#ff1f1f">L</div>
<div class="abs" style="left:401px;top:188px;width:48px;height:76px;background:#c6fde6"></div>
<div class="t" style="left:395.0px;top:212.0px;width:60px;text-align:center;font-size:23.3px;line-height:28px;color:#ff1f1f">L</div>
<div class="abs" style="left:451px;top:188px;width:48px;height:76px;background:#fff"></div>
<div class="t" style="left:445.0px;top:212.0px;width:60px;text-align:center;font-size:23.3px;line-height:28px;color:#111">8</div>
<div class="abs" style="left:501px;top:188px;width:48px;height:76px;background:#fff"></div>
<div class="t" style="left:495.0px;top:212.0px;width:60px;text-align:center;font-size:23.3px;line-height:28px;color:#111">8</div>
<div class="abs" style="left:551px;top:188px;width:48px;height:76px;background:#fff"></div>
<div class="t" style="left:545.0px;top:212.0px;width:60px;text-align:center;font-size:23.3px;line-height:28px;color:#111">8</div>
<div class="abs" style="left:601px;top:188px;width:48px;height:76px;background:#fff"></div>
<div class="t" style="left:595.0px;top:212.0px;width:60px;text-align:center;font-size:23.3px;line-height:28px;color:#111">8</div>
<div class="abs" style="left:651px;top:188px;width:48px;height:76px;background:#fff"></div>
<div class="t" style="left:645.0px;top:212.0px;width:60px;text-align:center;font-size:23.3px;line-height:28px;color:#111">8</div>
<div class="abs" style="left:701px;top:188px;width:48px;height:76px;background:#c6fde6"></div>
<div class="t" style="left:695.0px;top:212.0px;width:60px;text-align:center;font-size:23.3px;line-height:28px;color:#ff1f1f">L</div>
<div class="abs" style="left:751px;top:188px;width:48px;height:76px;background:#c6fde6"></div>
<div class="t" style="left:745.0px;top:212.0px;width:60px;text-align:center;font-size:23.3px;line-height:28px;color:#ff1f1f">L</div>
<div class="abs" style="left:801px;top:188px;width:48px;height:76px;background:#fff"></div>
<div class="t" style="left:795.0px;top:212.0px;width:60px;text-align:center;font-size:23.3px;line-height:28px;color:#111">8</div>
<div class="abs" style="left:851px;top:188px;width:48px;height:76px;background:#fff"></div>
<div class="t" style="left:845.0px;top:212.0px;width:60px;text-align:center;font-size:23.3px;line-height:28px;color:#111">8</div>
<div class="abs" style="left:901px;top:188px;width:48px;height:76px;background:#fff"></div>
<div class="t" style="left:895.0px;top:212.0px;width:60px;text-align:center;font-size:23.3px;line-height:28px;color:#111">8</div>
<div class="abs" style="left:951px;top:188px;width:48px;height:76px;background:#fff"></div>
<div class="t" style="left:945.0px;top:212.0px;width:60px;text-align:center;font-size:23.3px;line-height:28px;color:#111">8</div>
<div class="abs" style="left:1001px;top:188px;width:48px;height:76px;background:#fff"></div>
<div class="t" style="left:995.0px;top:212.0px;width:60px;text-align:center;font-size:23.3px;line-height:28px;color:#111">8</div>
<div class="abs" style="left:1051px;top:188px;width:48px;height:76px;background:#c6fde6"></div>
<div class="t" style="left:1045.0px;top:212.0px;width:60px;text-align:center;font-size:23.3px;line-height:28px;color:#ff1f1f">L</div>
<div class="abs" style="left:1101px;top:188px;width:48px;height:76px;background:#c6fde6"></div>
<div class="t" style="left:1095.0px;top:212.0px;width:60px;text-align:center;font-size:23.3px;line-height:28px;color:#ff1f1f">L</div>
<div class="abs" style="left:1151px;top:188px;width:48px;height:76px;background:#fff"></div>
<div class="t" style="left:1145.0px;top:212.0px;width:60px;text-align:center;font-size:23.3px;line-height:28px;color:#111">8</div>
<div class="abs" style="left:1201px;top:188px;width:48px;height:76px;background:#fff"></div>
<div class="t" style="left:1195.0px;top:212.0px;width:60px;text-align:center;font-size:23.3px;line-height:28px;color:#111">8</div>
<div class="abs" style="left:1251px;top:188px;width:48px;height:76px;background:#fff"></div>
<div class="t" style="left:1245.0px;top:212.0px;width:60px;text-align:center;font-size:23.3px;line-height:28px;color:#111">8</div>
<div class="abs" style="left:1301px;top:188px;width:48px;height:76px;background:#fff"></div>
<div class="t" style="left:1295.0px;top:212.0px;width:60px;text-align:center;font-size:23.3px;line-height:28px;color:#111">8</div>
<div class="abs" style="left:1351px;top:188px;width:48px;height:76px;background:#fff"></div>
<div class="t" style="left:1345.0px;top:212.0px;width:60px;text-align:center;font-size:23.3px;line-height:28px;color:#111">8</div>
<div class="abs" style="left:1401px;top:188px;width:48px;height:76px;background:#c6fde6"></div>
<div class="t" style="left:1395.0px;top:212.0px;width:60px;text-align:center;font-size:23.3px;line-height:28px;color:#ff1f1f">L</div>
<div class="abs" style="left:1451px;top:188px;width:48px;height:76px;background:#c6fde6"></div>
<div class="t" style="left:1445.0px;top:212.0px;width:60px;text-align:center;font-size:23.3px;line-height:28px;color:#ff1f1f">L</div>
<div class="abs" style="left:1501px;top:188px;width:48px;height:76px;background:#fff"></div>
<div class="t" style="left:1495.0px;top:212.0px;width:60px;text-align:center;font-size:23.3px;line-height:28px;color:#111">8</div>
<div class="abs" style="left:2px;top:266px;width:37px;height:76px;background:#fff"></div>
<div class="abs" style="left:41px;top:266px;width:148px;height:76px;background:#fff"></div>
<div class="t" style="left:-9.5px;top:290.0px;width:60px;text-align:center;font-size:23.3px;line-height:28px;color:#111">3</div>
<div class="t" style="left: 46.1px; top: 266px; font-size: 23.3px; line-height: 28px; color: rgb(17, 17, 17); transform: scaleX(0.8858); transform-origin: 0px 50%;">ALEXANDRES</div>
<div class="t" style="left: 45.19px; top: 294px; font-size: 23.3px; line-height: 28px; color: rgb(17, 17, 17); transform: scaleX(0.9123); transform-origin: 0px 50%;">CU IONUT</div>
<div class="t" style="left: 45.25px; top: 322px; font-size: 15.9px; line-height: 20px; color: rgb(77, 124, 255); -webkit-text-stroke: 0.25px rgb(77, 124, 255); transform: scaleX(0.9516); transform-origin: 0px 50%;">BARMAN - 513201</div>
<div class="t" style="left:175.20000000000005px;top:276.0px;width:90px;text-align:center;font-size:23.3px;line-height:28px;color:#111"><span style="display: inline-block; transform: scaleX(0.8655); transform-origin: 50% 50%;">10</span></div>
<div class="t" style="left:175.20000000000005px;top:304.0px;width:90px;text-align:center;font-size:23.3px;line-height:28px;color:#111"><span style="display: inline-block; transform: scaleX(0.9652); transform-origin: 50% 50%;">h/sapt</span></div>
<div class="abs" style="left:251px;top:266px;width:48px;height:76px;background:#fff"></div>
<div class="t" style="left:245.0px;top:290.0px;width:60px;text-align:center;font-size:23.3px;line-height:28px;color:#111">2</div>
<div class="abs" style="left:301px;top:266px;width:48px;height:76px;background:#fff"></div>
<div class="t" style="left:295.0px;top:290.0px;width:60px;text-align:center;font-size:23.3px;line-height:28px;color:#111">2</div>
<div class="abs" style="left:351px;top:266px;width:48px;height:76px;background:#c6fde6"></div>
<div class="t" style="left:345.0px;top:290.0px;width:60px;text-align:center;font-size:23.3px;line-height:28px;color:#ff1f1f">L</div>
<div class="abs" style="left:401px;top:266px;width:48px;height:76px;background:#c6fde6"></div>
<div class="t" style="left:395.0px;top:290.0px;width:60px;text-align:center;font-size:23.3px;line-height:28px;color:#ff1f1f">L</div>
<div class="abs" style="left:451px;top:266px;width:48px;height:76px;background:#fff"></div>
<div class="t" style="left:445.0px;top:290.0px;width:60px;text-align:center;font-size:23.3px;line-height:28px;color:#111">2</div>
<div class="abs" style="left:501px;top:266px;width:48px;height:76px;background:#fff"></div>
<div class="t" style="left:495.0px;top:290.0px;width:60px;text-align:center;font-size:23.3px;line-height:28px;color:#111">2</div>
<div class="abs" style="left:551px;top:266px;width:48px;height:76px;background:#fff"></div>
<div class="t" style="left:545.0px;top:290.0px;width:60px;text-align:center;font-size:23.3px;line-height:28px;color:#111">2</div>
<div class="abs" style="left:601px;top:266px;width:48px;height:76px;background:#fff"></div>
<div class="t" style="left:595.0px;top:290.0px;width:60px;text-align:center;font-size:23.3px;line-height:28px;color:#111">2</div>
<div class="abs" style="left:651px;top:266px;width:48px;height:76px;background:#fff"></div>
<div class="t" style="left:645.0px;top:290.0px;width:60px;text-align:center;font-size:23.3px;line-height:28px;color:#111">2</div>
<div class="abs" style="left:701px;top:266px;width:48px;height:76px;background:#c6fde6"></div>
<div class="t" style="left:695.0px;top:290.0px;width:60px;text-align:center;font-size:23.3px;line-height:28px;color:#ff1f1f">L</div>
<div class="abs" style="left:751px;top:266px;width:48px;height:76px;background:#c6fde6"></div>
<div class="t" style="left:745.0px;top:290.0px;width:60px;text-align:center;font-size:23.3px;line-height:28px;color:#ff1f1f">L</div>
<div class="abs" style="left:801px;top:266px;width:48px;height:76px;background:#fff"></div>
<div class="t" style="left:795.0px;top:290.0px;width:60px;text-align:center;font-size:23.3px;line-height:28px;color:#111">2</div>
<div class="abs" style="left:851px;top:266px;width:48px;height:76px;background:#fff"></div>
<div class="t" style="left:845.0px;top:290.0px;width:60px;text-align:center;font-size:23.3px;line-height:28px;color:#111">2</div>
<div class="abs" style="left:901px;top:266px;width:48px;height:76px;background:#fff"></div>
<div class="t" style="left:895.0px;top:290.0px;width:60px;text-align:center;font-size:23.3px;line-height:28px;color:#111">2</div>
<div class="abs" style="left:951px;top:266px;width:48px;height:76px;background:#fff"></div>
<div class="t" style="left:945.0px;top:290.0px;width:60px;text-align:center;font-size:23.3px;line-height:28px;color:#111">2</div>
<div class="abs" style="left:1001px;top:266px;width:48px;height:76px;background:#fff"></div>
<div class="t" style="left:995.0px;top:290.0px;width:60px;text-align:center;font-size:23.3px;line-height:28px;color:#111">2</div>
<div class="abs" style="left:1051px;top:266px;width:48px;height:76px;background:#c6fde6"></div>
<div class="t" style="left:1045.0px;top:290.0px;width:60px;text-align:center;font-size:23.3px;line-height:28px;color:#ff1f1f">L</div>
<div class="abs" style="left:1101px;top:266px;width:48px;height:76px;background:#c6fde6"></div>
<div class="t" style="left:1095.0px;top:290.0px;width:60px;text-align:center;font-size:23.3px;line-height:28px;color:#ff1f1f">L</div>
<div class="abs" style="left:1151px;top:266px;width:48px;height:76px;background:#fff"></div>
<div class="t" style="left:1145.0px;top:290.0px;width:60px;text-align:center;font-size:23.3px;line-height:28px;color:#111">2</div>
<div class="abs" style="left:1201px;top:266px;width:48px;height:76px;background:#fff"></div>
<div class="t" style="left:1195.0px;top:290.0px;width:60px;text-align:center;font-size:23.3px;line-height:28px;color:#111">2</div>
<div class="abs" style="left:1251px;top:266px;width:48px;height:76px;background:#fff"></div>
<div class="t" style="left:1245.0px;top:290.0px;width:60px;text-align:center;font-size:23.3px;line-height:28px;color:#111">2</div>
<div class="abs" style="left:1301px;top:266px;width:48px;height:76px;background:#fff"></div>
<div class="t" style="left:1295.0px;top:290.0px;width:60px;text-align:center;font-size:23.3px;line-height:28px;color:#111">2</div>
<div class="abs" style="left:1351px;top:266px;width:48px;height:76px;background:#fff"></div>
<div class="t" style="left:1345.0px;top:290.0px;width:60px;text-align:center;font-size:23.3px;line-height:28px;color:#111">2</div>
<div class="abs" style="left:1401px;top:266px;width:48px;height:76px;background:#c6fde6"></div>
<div class="t" style="left:1395.0px;top:290.0px;width:60px;text-align:center;font-size:23.3px;line-height:28px;color:#ff1f1f">L</div>
<div class="abs" style="left:1451px;top:266px;width:48px;height:76px;background:#c6fde6"></div>
<div class="t" style="left:1445.0px;top:290.0px;width:60px;text-align:center;font-size:23.3px;line-height:28px;color:#ff1f1f">L</div>
<div class="abs" style="left:1501px;top:266px;width:48px;height:76px;background:#fff"></div>
<div class="t" style="left:1495.0px;top:290.0px;width:60px;text-align:center;font-size:23.3px;line-height:28px;color:#111">2</div>
<div class="abs" style="left:2px;top:344px;width:37px;height:68px;background:#fff"></div>
<div class="abs" style="left:41px;top:344px;width:148px;height:68px;background:#fff"></div>
<div class="t" style="left:-9.5px;top:364.0px;width:60px;text-align:center;font-size:23.3px;line-height:28px;color:#111">4</div>
<div class="t" style="left: 45.18px; top: 344px; font-size: 23.3px; line-height: 28px; color: rgb(17, 17, 17); transform: scaleX(0.9164); transform-origin: 0px 50%;">CIOT ION</div>
<div class="t" style="left: 46.2px; top: 372px; font-size: 15.9px; line-height: 20px; color: rgb(77, 124, 255); -webkit-text-stroke: 0.25px rgb(77, 124, 255); transform: scaleX(0.938); transform-origin: 0px 50%;">TEHNICIENI WEB -</div>
<div class="t" style="left: 46.2px; top: 392px; font-size: 15.9px; line-height: 20px; color: rgb(77, 124, 255); -webkit-text-stroke: 0.25px rgb(77, 124, 255); transform: scaleX(0.8617); transform-origin: 0px 50%;">3514</div>
<div class="t" style="left:175.20000000000005px;top:364.0px;width:90px;text-align:center;font-size:23.3px;line-height:28px;color:#111"><span style="display: inline-block; transform: scaleX(0.955); transform-origin: 50% 50%;">2 h/zi</span></div>
<div class="abs" style="left:251px;top:344px;width:48px;height:68px;background:#fff"></div>
<div class="t" style="left:245.0px;top:364.0px;width:60px;text-align:center;font-size:23.3px;line-height:28px;color:#111">2</div>
<div class="abs" style="left:301px;top:344px;width:48px;height:68px;background:#fff"></div>
<div class="t" style="left:295.0px;top:364.0px;width:60px;text-align:center;font-size:23.3px;line-height:28px;color:#111">2</div>
<div class="abs" style="left:351px;top:344px;width:48px;height:68px;background:#c6fde6"></div>
<div class="t" style="left:345.0px;top:364.0px;width:60px;text-align:center;font-size:23.3px;line-height:28px;color:#ff1f1f">L</div>
<div class="abs" style="left:401px;top:344px;width:48px;height:68px;background:#c6fde6"></div>
<div class="t" style="left:395.0px;top:364.0px;width:60px;text-align:center;font-size:23.3px;line-height:28px;color:#ff1f1f">L</div>
<div class="abs" style="left:451px;top:344px;width:48px;height:68px;background:#fff"></div>
<div class="t" style="left:445.0px;top:364.0px;width:60px;text-align:center;font-size:23.3px;line-height:28px;color:#111">2</div>
<div class="abs" style="left:501px;top:344px;width:48px;height:68px;background:#fff"></div>
<div class="t" style="left:495.0px;top:364.0px;width:60px;text-align:center;font-size:23.3px;line-height:28px;color:#111">2</div>
<div class="abs" style="left:551px;top:344px;width:48px;height:68px;background:#fff"></div>
<div class="t" style="left:545.0px;top:364.0px;width:60px;text-align:center;font-size:23.3px;line-height:28px;color:#111">2</div>
<div class="abs" style="left:601px;top:344px;width:48px;height:68px;background:#fff"></div>
<div class="t" style="left:595.0px;top:364.0px;width:60px;text-align:center;font-size:23.3px;line-height:28px;color:#111">2</div>
<div class="abs" style="left:651px;top:344px;width:48px;height:68px;background:#fff"></div>
<div class="t" style="left:645.0px;top:364.0px;width:60px;text-align:center;font-size:23.3px;line-height:28px;color:#111">2</div>
<div class="abs" style="left:701px;top:344px;width:48px;height:68px;background:#c6fde6"></div>
<div class="t" style="left:695.0px;top:364.0px;width:60px;text-align:center;font-size:23.3px;line-height:28px;color:#ff1f1f">L</div>
<div class="abs" style="left:751px;top:344px;width:48px;height:68px;background:#c6fde6"></div>
<div class="t" style="left:745.0px;top:364.0px;width:60px;text-align:center;font-size:23.3px;line-height:28px;color:#ff1f1f">L</div>
<div class="abs" style="left:801px;top:344px;width:48px;height:68px;background:#fff"></div>
<div class="t" style="left:795.0px;top:364.0px;width:60px;text-align:center;font-size:23.3px;line-height:28px;color:#111">2</div>
<div class="abs" style="left:851px;top:344px;width:48px;height:68px;background:#fff"></div>
<div class="t" style="left:845.0px;top:364.0px;width:60px;text-align:center;font-size:23.3px;line-height:28px;color:#111">2</div>
<div class="abs" style="left:901px;top:344px;width:48px;height:68px;background:#fff"></div>
<div class="t" style="left:895.0px;top:364.0px;width:60px;text-align:center;font-size:23.3px;line-height:28px;color:#111">2</div>
<div class="abs" style="left:951px;top:344px;width:48px;height:68px;background:#fff"></div>
<div class="t" style="left:945.0px;top:364.0px;width:60px;text-align:center;font-size:23.3px;line-height:28px;color:#111">2</div>
<div class="abs" style="left:1001px;top:344px;width:48px;height:68px;background:#fff"></div>
<div class="t" style="left:995.0px;top:364.0px;width:60px;text-align:center;font-size:23.3px;line-height:28px;color:#111">2</div>
<div class="abs" style="left:1051px;top:344px;width:48px;height:68px;background:#c6fde6"></div>
<div class="t" style="left:1045.0px;top:364.0px;width:60px;text-align:center;font-size:23.3px;line-height:28px;color:#ff1f1f">L</div>
<div class="abs" style="left:1101px;top:344px;width:48px;height:68px;background:#c6fde6"></div>
<div class="t" style="left:1095.0px;top:364.0px;width:60px;text-align:center;font-size:23.3px;line-height:28px;color:#ff1f1f">L</div>
<div class="abs" style="left:1151px;top:344px;width:48px;height:68px;background:#fff"></div>
<div class="t" style="left:1145.0px;top:364.0px;width:60px;text-align:center;font-size:23.3px;line-height:28px;color:#111">2</div>
<div class="abs" style="left:1201px;top:344px;width:48px;height:68px;background:#fff"></div>
<div class="t" style="left:1195.0px;top:364.0px;width:60px;text-align:center;font-size:23.3px;line-height:28px;color:#111">2</div>
<div class="abs" style="left:1251px;top:344px;width:48px;height:68px;background:#fff"></div>
<div class="t" style="left:1245.0px;top:364.0px;width:60px;text-align:center;font-size:23.3px;line-height:28px;color:#111">2</div>
<div class="abs" style="left:1301px;top:344px;width:48px;height:68px;background:#fff"></div>
<div class="t" style="left:1295.0px;top:364.0px;width:60px;text-align:center;font-size:23.3px;line-height:28px;color:#111">2</div>
<div class="abs" style="left:1351px;top:344px;width:48px;height:68px;background:#fff"></div>
<div class="t" style="left:1345.0px;top:364.0px;width:60px;text-align:center;font-size:23.3px;line-height:28px;color:#111">2</div>
<div class="abs" style="left:1401px;top:344px;width:48px;height:68px;background:#c6fde6"></div>
<div class="t" style="left:1395.0px;top:364.0px;width:60px;text-align:center;font-size:23.3px;line-height:28px;color:#ff1f1f">L</div>
<div class="abs" style="left:1451px;top:344px;width:48px;height:68px;background:#c6fde6"></div>
<div class="t" style="left:1445.0px;top:364.0px;width:60px;text-align:center;font-size:23.3px;line-height:28px;color:#ff1f1f">L</div>
<div class="abs" style="left:1501px;top:344px;width:48px;height:68px;background:#fff"></div>
<div class="t" style="left:1495.0px;top:364.0px;width:60px;text-align:center;font-size:23.3px;line-height:28px;color:#111">2</div>
<div class="abs" style="left:2px;top:414px;width:37px;height:76px;background:#fff"></div>
<div class="abs" style="left:41px;top:414px;width:148px;height:76px;background:#fff"></div>
<div class="t" style="left:-9.5px;top:438.0px;width:60px;text-align:center;font-size:23.3px;line-height:28px;color:#111">5</div>
<div class="t" style="left: 45.21px; top: 414px; font-size: 23.3px; line-height: 28px; color: rgb(17, 17, 17); transform: scaleX(0.8934); transform-origin: 0px 50%;">FLORESCU</div>
<div class="t" style="left: 46.1px; top: 442px; font-size: 23.3px; line-height: 28px; color: rgb(17, 17, 17); transform: scaleX(0.8953); transform-origin: 0px 50%;">ANA</div>
<div class="t" style="left: 45.25px; top: 470px; font-size: 15.9px; line-height: 20px; color: rgb(77, 124, 255); -webkit-text-stroke: 0.25px rgb(77, 124, 255); transform: scaleX(0.9516); transform-origin: 0px 50%;">BARMAN - 513201</div>
<div class="t" style="left:175.20000000000005px;top:438.0px;width:90px;text-align:center;font-size:23.3px;line-height:28px;color:#111"><span style="display: inline-block; transform: scaleX(0.9625); transform-origin: 50% 50%;">8 h/zi</span></div>
<div class="abs" style="left:251px;top:414px;width:48px;height:76px;background:#fff"></div>
<div class="t" style="left:245.0px;top:438.0px;width:60px;text-align:center;font-size:23.3px;line-height:28px;color:#111">8</div>
<div class="abs" style="left:301px;top:414px;width:48px;height:76px;background:#fff"></div>
<div class="t" style="left:295.0px;top:438.0px;width:60px;text-align:center;font-size:23.3px;line-height:28px;color:#111">8</div>
<div class="abs" style="left:351px;top:414px;width:48px;height:76px;background:#c6fde6"></div>
<div class="t" style="left:345.0px;top:438.0px;width:60px;text-align:center;font-size:23.3px;line-height:28px;color:#ff1f1f">L</div>
<div class="abs" style="left:401px;top:414px;width:48px;height:76px;background:#c6fde6"></div>
<div class="t" style="left:395.0px;top:438.0px;width:60px;text-align:center;font-size:23.3px;line-height:28px;color:#ff1f1f">L</div>
<div class="abs" style="left:451px;top:414px;width:48px;height:76px;background:#fff"></div>
<div class="t" style="left:445.0px;top:438.0px;width:60px;text-align:center;font-size:23.3px;line-height:28px;color:#111">8</div>
<div class="abs" style="left:501px;top:414px;width:48px;height:76px;background:#fff"></div>
<div class="t" style="left:495.0px;top:438.0px;width:60px;text-align:center;font-size:23.3px;line-height:28px;color:#111">8</div>
<div class="abs" style="left:551px;top:414px;width:48px;height:76px;background:#fff"></div>
<div class="t" style="left:545.0px;top:438.0px;width:60px;text-align:center;font-size:23.3px;line-height:28px;color:#111">8</div>
<div class="abs" style="left:601px;top:414px;width:48px;height:76px;background:#fff"></div>
<div class="t" style="left:595.0px;top:438.0px;width:60px;text-align:center;font-size:23.3px;line-height:28px;color:#111">8</div>
<div class="abs" style="left:651px;top:414px;width:48px;height:76px;background:#fff"></div>
<div class="t" style="left:645.0px;top:438.0px;width:60px;text-align:center;font-size:23.3px;line-height:28px;color:#111">8</div>
<div class="abs" style="left:701px;top:414px;width:48px;height:76px;background:#c6fde6"></div>
<div class="t" style="left:695.0px;top:438.0px;width:60px;text-align:center;font-size:23.3px;line-height:28px;color:#ff1f1f">L</div>
<div class="abs" style="left:751px;top:414px;width:48px;height:76px;background:#c6fde6"></div>
<div class="t" style="left:745.0px;top:438.0px;width:60px;text-align:center;font-size:23.3px;line-height:28px;color:#ff1f1f">L</div>
<div class="abs" style="left:801px;top:414px;width:48px;height:76px;background:#fff"></div>
<div class="t" style="left:795.0px;top:438.0px;width:60px;text-align:center;font-size:23.3px;line-height:28px;color:#111">8</div>
<div class="abs" style="left:851px;top:414px;width:48px;height:76px;background:#fff"></div>
<div class="t" style="left:845.0px;top:438.0px;width:60px;text-align:center;font-size:23.3px;line-height:28px;color:#111">8</div>
<div class="abs" style="left:901px;top:414px;width:48px;height:76px;background:#fff"></div>
<div class="t" style="left:895.0px;top:438.0px;width:60px;text-align:center;font-size:23.3px;line-height:28px;color:#111">8</div>
<div class="abs" style="left:951px;top:414px;width:48px;height:76px;background:#fff"></div>
<div class="t" style="left:945.0px;top:438.0px;width:60px;text-align:center;font-size:23.3px;line-height:28px;color:#111">8</div>
<div class="abs" style="left:1001px;top:414px;width:48px;height:76px;background:#fff"></div>
<div class="t" style="left:995.0px;top:438.0px;width:60px;text-align:center;font-size:23.3px;line-height:28px;color:#111">8</div>
<div class="abs" style="left:1051px;top:414px;width:48px;height:76px;background:#c6fde6"></div>
<div class="t" style="left:1045.0px;top:438.0px;width:60px;text-align:center;font-size:23.3px;line-height:28px;color:#ff1f1f">L</div>
<div class="abs" style="left:1101px;top:414px;width:48px;height:76px;background:#c6fde6"></div>
<div class="t" style="left:1095.0px;top:438.0px;width:60px;text-align:center;font-size:23.3px;line-height:28px;color:#ff1f1f">L</div>
<div class="abs" style="left:1151px;top:414px;width:48px;height:76px;background:#fff"></div>
<div class="t" style="left:1145.0px;top:438.0px;width:60px;text-align:center;font-size:23.3px;line-height:28px;color:#111">8</div>
<div class="abs" style="left:1201px;top:414px;width:48px;height:76px;background:#fff"></div>
<div class="t" style="left:1195.0px;top:438.0px;width:60px;text-align:center;font-size:23.3px;line-height:28px;color:#111">8</div>
<div class="abs" style="left:1251px;top:414px;width:48px;height:76px;background:#fff"></div>
<div class="t" style="left:1245.0px;top:438.0px;width:60px;text-align:center;font-size:23.3px;line-height:28px;color:#111">8</div>
<div class="abs" style="left:1301px;top:414px;width:48px;height:76px;background:#fff"></div>
<div class="t" style="left:1295.0px;top:438.0px;width:60px;text-align:center;font-size:23.3px;line-height:28px;color:#111">8</div>
<div class="abs" style="left:1351px;top:414px;width:48px;height:76px;background:#fff"></div>
<div class="t" style="left:1345.0px;top:438.0px;width:60px;text-align:center;font-size:23.3px;line-height:28px;color:#111">8</div>
<div class="abs" style="left:1401px;top:414px;width:48px;height:76px;background:#c6fde6"></div>
<div class="t" style="left:1395.0px;top:438.0px;width:60px;text-align:center;font-size:23.3px;line-height:28px;color:#ff1f1f">L</div>
<div class="abs" style="left:1451px;top:414px;width:48px;height:76px;background:#c6fde6"></div>
<div class="t" style="left:1445.0px;top:438.0px;width:60px;text-align:center;font-size:23.3px;line-height:28px;color:#ff1f1f">L</div>
<div class="abs" style="left:1501px;top:414px;width:48px;height:76px;background:#fff"></div>
<div class="t" style="left:1495.0px;top:438.0px;width:60px;text-align:center;font-size:23.3px;line-height:28px;color:#111">8</div>
<div class="abs" style="left:2px;top:492px;width:37px;height:88px;background:#fff"></div>
<div class="abs" style="left:41px;top:492px;width:148px;height:88px;background:#fff"></div>
<div class="t" style="left:-9.5px;top:522.0px;width:60px;text-align:center;font-size:23.3px;line-height:28px;color:#111">6</div>
<div class="t" style="left: 45.18px; top: 492px; font-size: 23.3px; line-height: 28px; color: rgb(17, 17, 17); transform: scaleX(0.9184); transform-origin: 0px 50%;">HATEG ION</div>
<div class="t" style="left: 46.2px; top: 520px; font-size: 15.9px; line-height: 20px; color: rgb(77, 124, 255); -webkit-text-stroke: 0.25px rgb(77, 124, 255); transform: scaleX(0.9225); transform-origin: 0px 50%;">SPECIALIST</div>
<div class="t" style="left: 45.25px; top: 540px; font-size: 15.9px; line-height: 20px; color: rgb(77, 124, 255); -webkit-text-stroke: 0.25px rgb(77, 124, 255); transform: scaleX(0.9494); transform-origin: 0px 50%;">MARKETING</div>
<div class="t" style="left: 46.2px; top: 560px; font-size: 15.9px; line-height: 20px; color: rgb(77, 124, 255); -webkit-text-stroke: 0.25px rgb(77, 124, 255); transform: scaleX(0.9797); transform-origin: 0px 50%;">ONLINE - 243105</div>
<div class="t" style="left:175.20000000000005px;top:522.0px;width:90px;text-align:center;font-size:23.3px;line-height:28px;color:#111"><span style="display: inline-block; transform: scaleX(0.9625); transform-origin: 50% 50%;">8 h/zi</span></div>
<div class="abs" style="left:251px;top:492px;width:48px;height:88px;background:#fff"></div>
<div class="t" style="left:245.0px;top:522.0px;width:60px;text-align:center;font-size:23.3px;line-height:28px;color:#111">8</div>
<div class="abs" style="left:301px;top:492px;width:48px;height:88px;background:#fff"></div>
<div class="t" style="left:295.0px;top:522.0px;width:60px;text-align:center;font-size:23.3px;line-height:28px;color:#111">8</div>
<div class="abs" style="left:351px;top:492px;width:48px;height:88px;background:#c6fde6"></div>
<div class="t" style="left:345.0px;top:522.0px;width:60px;text-align:center;font-size:23.3px;line-height:28px;color:#ff1f1f">L</div>
<div class="abs" style="left:401px;top:492px;width:48px;height:88px;background:#c6fde6"></div>
<div class="t" style="left:395.0px;top:522.0px;width:60px;text-align:center;font-size:23.3px;line-height:28px;color:#ff1f1f">L</div>
<div class="abs" style="left:451px;top:492px;width:48px;height:88px;background:#fff"></div>
<div class="t" style="left:445.0px;top:522.0px;width:60px;text-align:center;font-size:23.3px;line-height:28px;color:#111">8</div>
<div class="abs" style="left:501px;top:492px;width:48px;height:88px;background:#fff"></div>
<div class="t" style="left:495.0px;top:522.0px;width:60px;text-align:center;font-size:23.3px;line-height:28px;color:#111">8</div>
<div class="abs" style="left:551px;top:492px;width:48px;height:88px;background:#fff"></div>
<div class="t" style="left:545.0px;top:522.0px;width:60px;text-align:center;font-size:23.3px;line-height:28px;color:#111">8</div>
<div class="abs" style="left:601px;top:492px;width:48px;height:88px;background:#fff"></div>
<div class="t" style="left:595.0px;top:522.0px;width:60px;text-align:center;font-size:23.3px;line-height:28px;color:#111">8</div>
<div class="abs" style="left:651px;top:492px;width:48px;height:88px;background:#fff"></div>
<div class="t" style="left:645.0px;top:522.0px;width:60px;text-align:center;font-size:23.3px;line-height:28px;color:#111">8</div>
<div class="abs" style="left:701px;top:492px;width:48px;height:88px;background:#c6fde6"></div>
<div class="t" style="left:695.0px;top:522.0px;width:60px;text-align:center;font-size:23.3px;line-height:28px;color:#ff1f1f">L</div>
<div class="abs" style="left:751px;top:492px;width:48px;height:88px;background:#c6fde6"></div>
<div class="t" style="left:745.0px;top:522.0px;width:60px;text-align:center;font-size:23.3px;line-height:28px;color:#ff1f1f">L</div>
<div class="abs" style="left:801px;top:492px;width:48px;height:88px;background:#fff"></div>
<div class="t" style="left:795.0px;top:522.0px;width:60px;text-align:center;font-size:23.3px;line-height:28px;color:#111">8</div>
<div class="abs" style="left:851px;top:492px;width:48px;height:88px;background:#fff"></div>
<div class="t" style="left:845.0px;top:522.0px;width:60px;text-align:center;font-size:23.3px;line-height:28px;color:#111">8</div>
<div class="abs" style="left:901px;top:492px;width:48px;height:88px;background:#fff"></div>
<div class="t" style="left:895.0px;top:522.0px;width:60px;text-align:center;font-size:23.3px;line-height:28px;color:#111">8</div>
<div class="abs" style="left:951px;top:492px;width:48px;height:88px;background:#fff"></div>
<div class="t" style="left:945.0px;top:522.0px;width:60px;text-align:center;font-size:23.3px;line-height:28px;color:#111">8</div>
<div class="abs" style="left:1001px;top:492px;width:48px;height:88px;background:#fff"></div>
<div class="t" style="left:995.0px;top:522.0px;width:60px;text-align:center;font-size:23.3px;line-height:28px;color:#111">8</div>
<div class="abs" style="left:1051px;top:492px;width:48px;height:88px;background:#c6fde6"></div>
<div class="t" style="left:1045.0px;top:522.0px;width:60px;text-align:center;font-size:23.3px;line-height:28px;color:#ff1f1f">L</div>
<div class="abs" style="left:1101px;top:492px;width:48px;height:88px;background:#c6fde6"></div>
<div class="t" style="left:1095.0px;top:522.0px;width:60px;text-align:center;font-size:23.3px;line-height:28px;color:#ff1f1f">L</div>
<div class="abs" style="left:1151px;top:492px;width:48px;height:88px;background:#fff"></div>
<div class="t" style="left:1145.0px;top:522.0px;width:60px;text-align:center;font-size:23.3px;line-height:28px;color:#111">8</div>
<div class="abs" style="left:1201px;top:492px;width:48px;height:88px;background:#fff"></div>
<div class="t" style="left:1195.0px;top:522.0px;width:60px;text-align:center;font-size:23.3px;line-height:28px;color:#111">8</div>
<div class="abs" style="left:1251px;top:492px;width:48px;height:88px;background:#fff"></div>
<div class="t" style="left:1245.0px;top:522.0px;width:60px;text-align:center;font-size:23.3px;line-height:28px;color:#111">8</div>
<div class="abs" style="left:1301px;top:492px;width:48px;height:88px;background:#fff"></div>
<div class="t" style="left:1295.0px;top:522.0px;width:60px;text-align:center;font-size:23.3px;line-height:28px;color:#111">8</div>
<div class="abs" style="left:1351px;top:492px;width:48px;height:88px;background:#fff"></div>
<div class="t" style="left:1345.0px;top:522.0px;width:60px;text-align:center;font-size:23.3px;line-height:28px;color:#111">8</div>
<div class="abs" style="left:1401px;top:492px;width:48px;height:88px;background:#c6fde6"></div>
<div class="t" style="left:1395.0px;top:522.0px;width:60px;text-align:center;font-size:23.3px;line-height:28px;color:#ff1f1f">L</div>
<div class="abs" style="left:1451px;top:492px;width:48px;height:88px;background:#c6fde6"></div>
<div class="t" style="left:1445.0px;top:522.0px;width:60px;text-align:center;font-size:23.3px;line-height:28px;color:#ff1f1f">L</div>
<div class="abs" style="left:1501px;top:492px;width:48px;height:88px;background:#fff"></div>
<div class="t" style="left:1495.0px;top:522.0px;width:60px;text-align:center;font-size:23.3px;line-height:28px;color:#111">8</div>
<div class="abs" style="left:2px;top:582px;width:37px;height:76px;background:#fff"></div>
<div class="abs" style="left:41px;top:582px;width:148px;height:76px;background:#fff"></div>
<div class="t" style="left:-9.5px;top:606.0px;width:60px;text-align:center;font-size:23.3px;line-height:28px;color:#111">7</div>
<div class="t" style="left: 44.28px; top: 582px; font-size: 23.3px; line-height: 28px; color: rgb(17, 17, 17); transform: scaleX(0.9098); transform-origin: 0px 50%;">IONESCU</div>
<div class="t" style="left: 46.1px; top: 610px; font-size: 23.3px; line-height: 28px; color: rgb(17, 17, 17); transform: scaleX(0.897); transform-origin: 0px 50%;">ANGELA</div>
<div class="t" style="left: 45.25px; top: 638px; font-size: 15.9px; line-height: 20px; color: rgb(77, 124, 255); -webkit-text-stroke: 0.25px rgb(77, 124, 255); transform: scaleX(0.9516); transform-origin: 0px 50%;">BARMAN - 513201</div>
<div class="t" style="left:175.20000000000005px;top:606.0px;width:90px;text-align:center;font-size:23.3px;line-height:28px;color:#111"><span style="display: inline-block; transform: scaleX(0.9625); transform-origin: 50% 50%;">8 h/zi</span></div>
<div class="abs" style="left:251px;top:582px;width:48px;height:76px;background:#fff"></div>
<div class="t" style="left:245.0px;top:606.0px;width:60px;text-align:center;font-size:23.3px;line-height:28px;color:#111">D</div>
<div class="abs" style="left:301px;top:582px;width:48px;height:76px;background:#fff"></div>
<div class="t" style="left:295.0px;top:606.0px;width:60px;text-align:center;font-size:23.3px;line-height:28px;color:#111">D</div>
<div class="abs" style="left:351px;top:582px;width:48px;height:76px;background:#e7e9fd"></div>
<div class="t" style="left:345.0px;top:606.0px;width:60px;text-align:center;font-size:23.3px;line-height:28px;color:#ff1f1f">D</div>
<div class="abs" style="left:401px;top:582px;width:48px;height:76px;background:#e7e9fd"></div>
<div class="t" style="left:395.0px;top:606.0px;width:60px;text-align:center;font-size:23.3px;line-height:28px;color:#ff1f1f">D</div>
<div class="abs" style="left:451px;top:582px;width:48px;height:76px;background:#fff"></div>
<div class="t" style="left:445.0px;top:606.0px;width:60px;text-align:center;font-size:23.3px;line-height:28px;color:#111">D</div>
<div class="abs" style="left:501px;top:582px;width:48px;height:76px;background:#fff"></div>
<div class="t" style="left:495.0px;top:606.0px;width:60px;text-align:center;font-size:23.3px;line-height:28px;color:#111">D</div>
<div class="abs" style="left:551px;top:582px;width:48px;height:76px;background:#fff"></div>
<div class="t" style="left:545.0px;top:606.0px;width:60px;text-align:center;font-size:23.3px;line-height:28px;color:#111">D</div>
<div class="abs" style="left:601px;top:582px;width:48px;height:76px;background:#fff"></div>
<div class="t" style="left:595.0px;top:606.0px;width:60px;text-align:center;font-size:23.3px;line-height:28px;color:#111">D</div>
<div class="abs" style="left:651px;top:582px;width:48px;height:76px;background:#fff"></div>
<div class="t" style="left:645.0px;top:606.0px;width:60px;text-align:center;font-size:23.3px;line-height:28px;color:#111">D</div>
<div class="abs" style="left:701px;top:582px;width:48px;height:76px;background:#e7e9fd"></div>
<div class="t" style="left:695.0px;top:606.0px;width:60px;text-align:center;font-size:23.3px;line-height:28px;color:#ff1f1f">D</div>
<div class="abs" style="left:751px;top:582px;width:48px;height:76px;background:#e7e9fd"></div>
<div class="t" style="left:745.0px;top:606.0px;width:60px;text-align:center;font-size:23.3px;line-height:28px;color:#ff1f1f">D</div>
<div class="abs" style="left:801px;top:582px;width:48px;height:76px;background:#fff"></div>
<div class="t" style="left:795.0px;top:606.0px;width:60px;text-align:center;font-size:23.3px;line-height:28px;color:#111">D</div>
<div class="abs" style="left:851px;top:582px;width:48px;height:76px;background:#fff"></div>
<div class="t" style="left:845.0px;top:606.0px;width:60px;text-align:center;font-size:23.3px;line-height:28px;color:#111">D</div>
<div class="abs" style="left:901px;top:582px;width:48px;height:76px;background:#fff"></div>
<div class="t" style="left:895.0px;top:606.0px;width:60px;text-align:center;font-size:23.3px;line-height:28px;color:#111">D</div>
<div class="abs" style="left:951px;top:582px;width:48px;height:76px;background:#fff"></div>
<div class="t" style="left:945.0px;top:606.0px;width:60px;text-align:center;font-size:23.3px;line-height:28px;color:#111">D</div>
<div class="abs" style="left:1001px;top:582px;width:48px;height:76px;background:#fff"></div>
<div class="t" style="left:995.0px;top:606.0px;width:60px;text-align:center;font-size:23.3px;line-height:28px;color:#111">D</div>
<div class="abs" style="left:1051px;top:582px;width:48px;height:76px;background:#e7e9fd"></div>
<div class="t" style="left:1045.0px;top:606.0px;width:60px;text-align:center;font-size:23.3px;line-height:28px;color:#ff1f1f">D</div>
<div class="abs" style="left:1101px;top:582px;width:48px;height:76px;background:#e7e9fd"></div>
<div class="t" style="left:1095.0px;top:606.0px;width:60px;text-align:center;font-size:23.3px;line-height:28px;color:#ff1f1f">D</div>
<div class="abs" style="left:1151px;top:582px;width:48px;height:76px;background:#fff"></div>
<div class="t" style="left:1145.0px;top:606.0px;width:60px;text-align:center;font-size:23.3px;line-height:28px;color:#111">D</div>
<div class="abs" style="left:1201px;top:582px;width:48px;height:76px;background:#fff"></div>
<div class="t" style="left:1195.0px;top:606.0px;width:60px;text-align:center;font-size:23.3px;line-height:28px;color:#111">D</div>
<div class="abs" style="left:1251px;top:582px;width:48px;height:76px;background:#fff"></div>
<div class="t" style="left:1245.0px;top:606.0px;width:60px;text-align:center;font-size:23.3px;line-height:28px;color:#111">D</div>
<div class="abs" style="left:1301px;top:582px;width:48px;height:76px;background:#fff"></div>
<div class="t" style="left:1295.0px;top:606.0px;width:60px;text-align:center;font-size:23.3px;line-height:28px;color:#111">D</div>
<div class="abs" style="left:1351px;top:582px;width:48px;height:76px;background:#fff"></div>
<div class="t" style="left:1345.0px;top:606.0px;width:60px;text-align:center;font-size:23.3px;line-height:28px;color:#111">D</div>
<div class="abs" style="left:1401px;top:582px;width:48px;height:76px;background:#e7e9fd"></div>
<div class="t" style="left:1395.0px;top:606.0px;width:60px;text-align:center;font-size:23.3px;line-height:28px;color:#ff1f1f">D</div>
<div class="abs" style="left:1451px;top:582px;width:48px;height:76px;background:#e7e9fd"></div>
<div class="t" style="left:1445.0px;top:606.0px;width:60px;text-align:center;font-size:23.3px;line-height:28px;color:#ff1f1f">D</div>
<div class="abs" style="left:1501px;top:582px;width:48px;height:76px;background:#fff"></div>
<div class="t" style="left:1495.0px;top:606.0px;width:60px;text-align:center;font-size:23.3px;line-height:28px;color:#111">D</div>
<div class="abs" style="left:2px;top:660px;width:37px;height:50px;background:#fff"></div>
<div class="abs" style="left:41px;top:660px;width:148px;height:50px;background:#fff"></div>
<div class="t" style="left:-9.5px;top:671.0px;width:60px;text-align:center;font-size:23.3px;line-height:28px;color:#111">8</div>
<div class="t" style="left: 45.23px; top: 660px; font-size: 23.3px; line-height: 28px; color: rgb(17, 17, 17); transform: scaleX(0.8734); transform-origin: 0px 50%;">NEGRU ALEX</div>
<div class="t" style="left: 45.25px; top: 688px; font-size: 15.9px; line-height: 20px; color: rgb(77, 124, 255); -webkit-text-stroke: 0.25px rgb(77, 124, 255); transform: scaleX(0.9516); transform-origin: 0px 50%;">BARMAN - 513201</div>
<div class="t" style="left:175.20000000000005px;top:671.0px;width:90px;text-align:center;font-size:23.3px;line-height:28px;color:#111"><span style="display: inline-block; transform: scaleX(0.9625); transform-origin: 50% 50%;">8 h/zi</span></div>
<div class="abs" style="left:251px;top:660px;width:48px;height:50px;background:#fff"></div>
<div class="t" style="left:245.0px;top:671.0px;width:60px;text-align:center;font-size:23.3px;line-height:28px;color:#111">8</div>
<div class="abs" style="left:301px;top:660px;width:48px;height:50px;background:#fff"></div>
<div class="t" style="left:295.0px;top:671.0px;width:60px;text-align:center;font-size:23.3px;line-height:28px;color:#111">8</div>
<div class="abs" style="left:351px;top:660px;width:48px;height:50px;background:#c6fde6"></div>
<div class="t" style="left:345.0px;top:671.0px;width:60px;text-align:center;font-size:23.3px;line-height:28px;color:#ff1f1f">L</div>
<div class="abs" style="left:401px;top:660px;width:48px;height:50px;background:#c6fde6"></div>
<div class="t" style="left:395.0px;top:671.0px;width:60px;text-align:center;font-size:23.3px;line-height:28px;color:#ff1f1f">L</div>
<div class="abs" style="left:451px;top:660px;width:48px;height:50px;background:#fff"></div>
<div class="t" style="left:445.0px;top:671.0px;width:60px;text-align:center;font-size:23.3px;line-height:28px;color:#111">8</div>
<div class="abs" style="left:501px;top:660px;width:48px;height:50px;background:#fff"></div>
<div class="t" style="left:495.0px;top:671.0px;width:60px;text-align:center;font-size:23.3px;line-height:28px;color:#111">8</div>
<div class="abs" style="left:551px;top:660px;width:48px;height:50px;background:#fff"></div>
<div class="t" style="left:545.0px;top:671.0px;width:60px;text-align:center;font-size:23.3px;line-height:28px;color:#111">8</div>
<div class="abs" style="left:601px;top:660px;width:48px;height:50px;background:#fff"></div>
<div class="t" style="left:595.0px;top:671.0px;width:60px;text-align:center;font-size:23.3px;line-height:28px;color:#111">8</div>
<div class="abs" style="left:651px;top:660px;width:48px;height:50px;background:#fff"></div>
<div class="t" style="left:645.0px;top:671.0px;width:60px;text-align:center;font-size:23.3px;line-height:28px;color:#111">8</div>
<div class="abs" style="left:701px;top:660px;width:48px;height:50px;background:#c6fde6"></div>
<div class="t" style="left:695.0px;top:671.0px;width:60px;text-align:center;font-size:23.3px;line-height:28px;color:#ff1f1f">L</div>
<div class="abs" style="left:751px;top:660px;width:48px;height:50px;background:#c6fde6"></div>
<div class="t" style="left:745.0px;top:671.0px;width:60px;text-align:center;font-size:23.3px;line-height:28px;color:#ff1f1f">L</div>
<div class="abs" style="left:801px;top:660px;width:48px;height:50px;background:#fff"></div>
<div class="t" style="left:795.0px;top:671.0px;width:60px;text-align:center;font-size:23.3px;line-height:28px;color:#111">8</div>
<div class="abs" style="left:851px;top:660px;width:48px;height:50px;background:#fff"></div>
<div class="t" style="left:845.0px;top:671.0px;width:60px;text-align:center;font-size:23.3px;line-height:28px;color:#111">8</div>
<div class="abs" style="left:901px;top:660px;width:48px;height:50px;background:#fff"></div>
<div class="t" style="left:895.0px;top:671.0px;width:60px;text-align:center;font-size:23.3px;line-height:28px;color:#111">8</div>
<div class="abs" style="left:951px;top:660px;width:48px;height:50px;background:#fff"></div>
<div class="t" style="left:945.0px;top:671.0px;width:60px;text-align:center;font-size:23.3px;line-height:28px;color:#111">8</div>
<div class="abs" style="left:1001px;top:660px;width:48px;height:50px;background:#fff"></div>
<div class="t" style="left:995.0px;top:671.0px;width:60px;text-align:center;font-size:23.3px;line-height:28px;color:#111">8</div>
<div class="abs" style="left:1051px;top:660px;width:48px;height:50px;background:#c6fde6"></div>
<div class="t" style="left:1045.0px;top:671.0px;width:60px;text-align:center;font-size:23.3px;line-height:28px;color:#ff1f1f">L</div>
<div class="abs" style="left:1101px;top:660px;width:48px;height:50px;background:#c6fde6"></div>
<div class="t" style="left:1095.0px;top:671.0px;width:60px;text-align:center;font-size:23.3px;line-height:28px;color:#ff1f1f">L</div>
<div class="abs" style="left:1151px;top:660px;width:48px;height:50px;background:#fff"></div>
<div class="t" style="left:1145.0px;top:671.0px;width:60px;text-align:center;font-size:23.3px;line-height:28px;color:#111">8</div>
<div class="abs" style="left:1201px;top:660px;width:48px;height:50px;background:#fff"></div>
<div class="t" style="left:1195.0px;top:671.0px;width:60px;text-align:center;font-size:23.3px;line-height:28px;color:#111">8</div>
<div class="abs" style="left:1251px;top:660px;width:48px;height:50px;background:#fff"></div>
<div class="t" style="left:1245.0px;top:671.0px;width:60px;text-align:center;font-size:23.3px;line-height:28px;color:#111">8</div>
<div class="abs" style="left:1301px;top:660px;width:48px;height:50px;background:#fff"></div>
<div class="t" style="left:1295.0px;top:671.0px;width:60px;text-align:center;font-size:23.3px;line-height:28px;color:#111">8</div>
<div class="abs" style="left:1351px;top:660px;width:48px;height:50px;background:#fff"></div>
<div class="t" style="left:1345.0px;top:671.0px;width:60px;text-align:center;font-size:23.3px;line-height:28px;color:#111">8</div>
<div class="abs" style="left:1401px;top:660px;width:48px;height:50px;background:#c6fde6"></div>
<div class="t" style="left:1395.0px;top:671.0px;width:60px;text-align:center;font-size:23.3px;line-height:28px;color:#ff1f1f">L</div>
<div class="abs" style="left:1451px;top:660px;width:48px;height:50px;background:#c6fde6"></div>
<div class="t" style="left:1445.0px;top:671.0px;width:60px;text-align:center;font-size:23.3px;line-height:28px;color:#ff1f1f">L</div>
<div class="abs" style="left:1501px;top:660px;width:48px;height:50px;background:#fff"></div>
<div class="t" style="left:1495.0px;top:671.0px;width:60px;text-align:center;font-size:23.3px;line-height:28px;color:#111">8</div>
<div class="abs" style="left:2px;top:712px;width:37px;height:68px;background:#fff"></div>
<div class="abs" style="left:41px;top:712px;width:148px;height:68px;background:#fff"></div>
<div class="t" style="left:-9.5px;top:732.0px;width:60px;text-align:center;font-size:23.3px;line-height:28px;color:#111">9</div>
<div class="t" style="left: 45.2px; top: 712px; font-size: 23.3px; line-height: 28px; color: rgb(17, 17, 17); transform: scaleX(0.9035); transform-origin: 0px 50%;">ROSU ALIN</div>
<div class="t" style="left: 45.23px; top: 740px; font-size: 15.9px; line-height: 20px; color: rgb(77, 124, 255); -webkit-text-stroke: 0.25px rgb(77, 124, 255); transform: scaleX(0.9685); transform-origin: 0px 50%;">BARMAN - SEF -</div>
<div class="t" style="left: 46.2px; top: 760px; font-size: 15.9px; line-height: 20px; color: rgb(77, 124, 255); -webkit-text-stroke: 0.25px rgb(77, 124, 255); transform: scaleX(1.0021); transform-origin: 0px 50%;">343402</div>
<div class="t" style="left:175.20000000000005px;top:732.0px;width:90px;text-align:center;font-size:23.3px;line-height:28px;color:#111"><span style="display: inline-block; transform: scaleX(0.9625); transform-origin: 50% 50%;">8 h/zi</span></div>
<div class="abs" style="left:251px;top:712px;width:48px;height:68px;background:#fff"></div>
<div class="t" style="left:245.0px;top:732.0px;width:60px;text-align:center;font-size:23.3px;line-height:28px;color:#111">8</div>
<div class="abs" style="left:301px;top:712px;width:48px;height:68px;background:#fff"></div>
<div class="t" style="left:295.0px;top:732.0px;width:60px;text-align:center;font-size:23.3px;line-height:28px;color:#111">8</div>
<div class="abs" style="left:351px;top:712px;width:48px;height:68px;background:#c6fde6"></div>
<div class="t" style="left:345.0px;top:732.0px;width:60px;text-align:center;font-size:23.3px;line-height:28px;color:#ff1f1f">L</div>
<div class="abs" style="left:401px;top:712px;width:48px;height:68px;background:#c6fde6"></div>
<div class="t" style="left:395.0px;top:732.0px;width:60px;text-align:center;font-size:23.3px;line-height:28px;color:#ff1f1f">L</div>
<div class="abs" style="left:451px;top:712px;width:48px;height:68px;background:#fff"></div>
<div class="t" style="left:445.0px;top:732.0px;width:60px;text-align:center;font-size:23.3px;line-height:28px;color:#111">8</div>
<div class="abs" style="left:501px;top:712px;width:48px;height:68px;background:#fff"></div>
<div class="t" style="left:495.0px;top:732.0px;width:60px;text-align:center;font-size:23.3px;line-height:28px;color:#111">8</div>
<div class="abs" style="left:551px;top:712px;width:48px;height:68px;background:#fff"></div>
<div class="t" style="left:545.0px;top:732.0px;width:60px;text-align:center;font-size:23.3px;line-height:28px;color:#111">8</div>
<div class="abs" style="left:601px;top:712px;width:48px;height:68px;background:#fff"></div>
<div class="t" style="left:595.0px;top:732.0px;width:60px;text-align:center;font-size:23.3px;line-height:28px;color:#111">8</div>
<div class="abs" style="left:651px;top:712px;width:48px;height:68px;background:#fff"></div>
<div class="t" style="left:645.0px;top:732.0px;width:60px;text-align:center;font-size:23.3px;line-height:28px;color:#111">8</div>
<div class="abs" style="left:701px;top:712px;width:48px;height:68px;background:#c6fde6"></div>
<div class="t" style="left:695.0px;top:732.0px;width:60px;text-align:center;font-size:23.3px;line-height:28px;color:#ff1f1f">L</div>
<div class="abs" style="left:751px;top:712px;width:48px;height:68px;background:#c6fde6"></div>
<div class="t" style="left:745.0px;top:732.0px;width:60px;text-align:center;font-size:23.3px;line-height:28px;color:#ff1f1f">L</div>
<div class="abs" style="left:801px;top:712px;width:48px;height:68px;background:#fff"></div>
<div class="t" style="left:795.0px;top:732.0px;width:60px;text-align:center;font-size:23.3px;line-height:28px;color:#111">8</div>
<div class="abs" style="left:851px;top:712px;width:48px;height:68px;background:#fff"></div>
<div class="t" style="left:845.0px;top:732.0px;width:60px;text-align:center;font-size:23.3px;line-height:28px;color:#111">8</div>
<div class="abs" style="left:901px;top:712px;width:48px;height:68px;background:#fff"></div>
<div class="t" style="left:895.0px;top:732.0px;width:60px;text-align:center;font-size:23.3px;line-height:28px;color:#111">8</div>
<div class="abs" style="left:951px;top:712px;width:48px;height:68px;background:#fff"></div>
<div class="t" style="left:945.0px;top:732.0px;width:60px;text-align:center;font-size:23.3px;line-height:28px;color:#111">8</div>
<div class="abs" style="left:1001px;top:712px;width:48px;height:68px;background:#fff"></div>
<div class="t" style="left:995.0px;top:732.0px;width:60px;text-align:center;font-size:23.3px;line-height:28px;color:#111">8</div>
<div class="abs" style="left:1051px;top:712px;width:48px;height:68px;background:#c6fde6"></div>
<div class="t" style="left:1045.0px;top:732.0px;width:60px;text-align:center;font-size:23.3px;line-height:28px;color:#ff1f1f">L</div>
<div class="abs" style="left:1101px;top:712px;width:48px;height:68px;background:#c6fde6"></div>
<div class="t" style="left:1095.0px;top:732.0px;width:60px;text-align:center;font-size:23.3px;line-height:28px;color:#ff1f1f">L</div>
<div class="abs" style="left:1151px;top:712px;width:48px;height:68px;background:#fff"></div>
<div class="t" style="left:1145.0px;top:732.0px;width:60px;text-align:center;font-size:23.3px;line-height:28px;color:#111">8</div>
<div class="abs" style="left:1201px;top:712px;width:48px;height:68px;background:#fff"></div>
<div class="t" style="left:1195.0px;top:732.0px;width:60px;text-align:center;font-size:23.3px;line-height:28px;color:#111">8</div>
<div class="abs" style="left:1251px;top:712px;width:48px;height:68px;background:#fff"></div>
<div class="t" style="left:1245.0px;top:732.0px;width:60px;text-align:center;font-size:23.3px;line-height:28px;color:#111">8</div>
<div class="abs" style="left:1301px;top:712px;width:48px;height:68px;background:#fff"></div>
<div class="t" style="left:1295.0px;top:732.0px;width:60px;text-align:center;font-size:23.3px;line-height:28px;color:#111">8</div>
<div class="abs" style="left:1351px;top:712px;width:48px;height:68px;background:#fff"></div>
<div class="t" style="left:1345.0px;top:732.0px;width:60px;text-align:center;font-size:23.3px;line-height:28px;color:#111">8</div>
<div class="abs" style="left:1401px;top:712px;width:48px;height:68px;background:#c6fde6"></div>
<div class="t" style="left:1395.0px;top:732.0px;width:60px;text-align:center;font-size:23.3px;line-height:28px;color:#ff1f1f">L</div>
<div class="abs" style="left:1451px;top:712px;width:48px;height:68px;background:#c6fde6"></div>
<div class="t" style="left:1445.0px;top:732.0px;width:60px;text-align:center;font-size:23.3px;line-height:28px;color:#ff1f1f">L</div>
<div class="abs" style="left:1501px;top:712px;width:48px;height:68px;background:#fff"></div>
<div class="t" style="left:1495.0px;top:732.0px;width:60px;text-align:center;font-size:23.3px;line-height:28px;color:#111">8</div>
<div class="abs" style="left:2px;top:782px;width:37px;height:68px;background:#fff"></div>
<div class="abs" style="left:41px;top:782px;width:148px;height:68px;background:#fff"></div>
<div class="t" style="left:-9.5px;top:802.0px;width:60px;text-align:center;font-size:23.3px;line-height:28px;color:#111">10</div>
<div class="t" style="left: 45.2px; top: 782px; font-size: 23.3px; line-height: 28px; color: rgb(17, 17, 17); transform: scaleX(0.9035); transform-origin: 0px 50%;">ROSU ALIN</div>
<div class="t" style="left: 46.2px; top: 810px; font-size: 15.9px; line-height: 20px; color: rgb(77, 124, 255); -webkit-text-stroke: 0.25px rgb(77, 124, 255); transform: scaleX(0.9399); transform-origin: 0px 50%;">CEASORNICAR -</div>
<div class="t" style="left: 46.2px; top: 830px; font-size: 15.9px; line-height: 20px; color: rgb(77, 124, 255); -webkit-text-stroke: 0.25px rgb(77, 124, 255); transform: scaleX(0.8922); transform-origin: 0px 50%;">731104</div>
<div class="t" style="left:175.20000000000005px;top:802.0px;width:90px;text-align:center;font-size:23.3px;line-height:28px;color:#111"><span style="display: inline-block; transform: scaleX(0.955); transform-origin: 50% 50%;">2 h/zi</span></div>
<div class="abs" style="left:251px;top:782px;width:48px;height:68px;background:#fff"></div>
<div class="t" style="left:245.0px;top:802.0px;width:60px;text-align:center;font-size:23.3px;line-height:28px;color:#111">S</div>
<div class="abs" style="left:301px;top:782px;width:48px;height:68px;background:#fff"></div>
<div class="t" style="left:295.0px;top:802.0px;width:60px;text-align:center;font-size:23.3px;line-height:28px;color:#111">S</div>
<div class="abs" style="left:351px;top:782px;width:48px;height:68px;background:#e7e9fd"></div>
<div class="t" style="left:345.0px;top:802.0px;width:60px;text-align:center;font-size:23.3px;line-height:28px;color:#ff1f1f">S</div>
<div class="abs" style="left:401px;top:782px;width:48px;height:68px;background:#e7e9fd"></div>
<div class="t" style="left:395.0px;top:802.0px;width:60px;text-align:center;font-size:23.3px;line-height:28px;color:#ff1f1f">S</div>
<div class="abs" style="left:451px;top:782px;width:48px;height:68px;background:#fff"></div>
<div class="t" style="left:445.0px;top:802.0px;width:60px;text-align:center;font-size:23.3px;line-height:28px;color:#111">S</div>
<div class="abs" style="left:501px;top:782px;width:48px;height:68px;background:#fff"></div>
<div class="t" style="left:495.0px;top:802.0px;width:60px;text-align:center;font-size:23.3px;line-height:28px;color:#111">S</div>
<div class="abs" style="left:551px;top:782px;width:48px;height:68px;background:#fff"></div>
<div class="t" style="left:545.0px;top:802.0px;width:60px;text-align:center;font-size:23.3px;line-height:28px;color:#111">S</div>
<div class="abs" style="left:601px;top:782px;width:48px;height:68px;background:#fff"></div>
<div class="t" style="left:595.0px;top:802.0px;width:60px;text-align:center;font-size:23.3px;line-height:28px;color:#111">S</div>
<div class="abs" style="left:651px;top:782px;width:48px;height:68px;background:#fff"></div>
<div class="t" style="left:645.0px;top:802.0px;width:60px;text-align:center;font-size:23.3px;line-height:28px;color:#111">S</div>
<div class="abs" style="left:701px;top:782px;width:48px;height:68px;background:#e7e9fd"></div>
<div class="t" style="left:695.0px;top:802.0px;width:60px;text-align:center;font-size:23.3px;line-height:28px;color:#ff1f1f">S</div>
<div class="abs" style="left:751px;top:782px;width:48px;height:68px;background:#e7e9fd"></div>
<div class="t" style="left:745.0px;top:802.0px;width:60px;text-align:center;font-size:23.3px;line-height:28px;color:#ff1f1f">S</div>
<div class="abs" style="left:801px;top:782px;width:48px;height:68px;background:#fff"></div>
<div class="t" style="left:795.0px;top:802.0px;width:60px;text-align:center;font-size:23.3px;line-height:28px;color:#111">S</div>
<div class="abs" style="left:851px;top:782px;width:48px;height:68px;background:#fff"></div>
<div class="t" style="left:845.0px;top:802.0px;width:60px;text-align:center;font-size:23.3px;line-height:28px;color:#111">S</div>
<div class="abs" style="left:901px;top:782px;width:48px;height:68px;background:#fff"></div>
<div class="t" style="left:895.0px;top:802.0px;width:60px;text-align:center;font-size:23.3px;line-height:28px;color:#111">S</div>
<div class="abs" style="left:951px;top:782px;width:48px;height:68px;background:#fff"></div>
<div class="t" style="left:945.0px;top:802.0px;width:60px;text-align:center;font-size:23.3px;line-height:28px;color:#111">S</div>
<div class="abs" style="left:1001px;top:782px;width:48px;height:68px;background:#fff"></div>
<div class="t" style="left:995.0px;top:802.0px;width:60px;text-align:center;font-size:23.3px;line-height:28px;color:#111">S</div>
<div class="abs" style="left:1051px;top:782px;width:48px;height:68px;background:#e7e9fd"></div>
<div class="t" style="left:1045.0px;top:802.0px;width:60px;text-align:center;font-size:23.3px;line-height:28px;color:#ff1f1f">S</div>
<div class="abs" style="left:1101px;top:782px;width:48px;height:68px;background:#e7e9fd"></div>
<div class="t" style="left:1095.0px;top:802.0px;width:60px;text-align:center;font-size:23.3px;line-height:28px;color:#ff1f1f">S</div>
<div class="abs" style="left:1151px;top:782px;width:48px;height:68px;background:#fff"></div>
<div class="t" style="left:1145.0px;top:802.0px;width:60px;text-align:center;font-size:23.3px;line-height:28px;color:#111">S</div>
<div class="abs" style="left:1201px;top:782px;width:48px;height:68px;background:#fff"></div>
<div class="t" style="left:1195.0px;top:802.0px;width:60px;text-align:center;font-size:23.3px;line-height:28px;color:#111">S</div>
<div class="abs" style="left:1251px;top:782px;width:48px;height:68px;background:#fff"></div>
<div class="t" style="left:1245.0px;top:802.0px;width:60px;text-align:center;font-size:23.3px;line-height:28px;color:#111">S</div>
<div class="abs" style="left:1301px;top:782px;width:48px;height:68px;background:#fff"></div>
<div class="t" style="left:1295.0px;top:802.0px;width:60px;text-align:center;font-size:23.3px;line-height:28px;color:#111">S</div>
<div class="abs" style="left:1351px;top:782px;width:48px;height:68px;background:#fff"></div>
<div class="t" style="left:1345.0px;top:802.0px;width:60px;text-align:center;font-size:23.3px;line-height:28px;color:#111">S</div>
<div class="abs" style="left:1401px;top:782px;width:48px;height:68px;background:#e7e9fd"></div>
<div class="t" style="left:1395.0px;top:802.0px;width:60px;text-align:center;font-size:23.3px;line-height:28px;color:#ff1f1f">S</div>
<div class="abs" style="left:1451px;top:782px;width:48px;height:68px;background:#e7e9fd"></div>
<div class="t" style="left:1445.0px;top:802.0px;width:60px;text-align:center;font-size:23.3px;line-height:28px;color:#ff1f1f">S</div>
<div class="abs" style="left:1501px;top:782px;width:48px;height:68px;background:#fff"></div>
<div class="t" style="left:1495.0px;top:802.0px;width:60px;text-align:center;font-size:23.3px;line-height:28px;color:#111">S</div>
</div>
<div class="abs" style="left:975px;top:619px;width:82px;height:82px;border-radius:50%;background:rgba(0,0,0,0.028)"></div>
<div class="abs" style="left:1002px;top:647px;width:28px;height:28px;border-radius:50%;background:rgba(147,147,147,.56)"></div>
<div class="abs" style="left:743px;top:766px;width:28px;height:28px;border-radius:50%;background:rgba(147,147,147,.56)"></div>
<div class="abs" style="left:1265px;top:891px;width:82px;height:82px;border-radius:50%;background:rgba(0,0,0,0.022)"></div>
<div class="abs" style="left:1292px;top:918px;width:28px;height:28px;border-radius:50%;background:rgba(147,147,147,.56)"></div>
<div class="abs" style="left:620px;top:1122px;width:84px;height:86px;overflow:hidden"><div class="abs" style="left:0;top:0;width:82px;height:82px;border-radius:50%;background:rgba(0,0,0,.03)"></div></div>
<div class="abs" style="left:647.5px;top:1149px;width:28px;height:28px;border-radius:50%;background:rgba(147,147,147,.56)"></div>
<div class="abs" style="left:481px;top:1730px;width:1248px;height:10px;background:#999"></div>
<svg class="abs" style="left:2040px;top:1650px" width="40" height="56" viewBox="2040 1650 40 56"><path d="M2044.600 1658.800L2044.600 1691.800L2052.300 1685.100L2057.300 1696.300L2062.200 1694.100L2057.600 1683.200L2069 1683.200Z" fill="#fff" stroke="#111" stroke-width="1.200" stroke-linejoin="miter"></path></svg>
<svg class="abs" style="left:481px;top:1460px" width="22" height="22" viewBox="481 1460 22 22" fill="none"><path d="M482 1460V1463A16 16 0 0 0 498 1479H503" stroke="#e6f7ff" stroke-width="2"></path></svg>
</body></html>
